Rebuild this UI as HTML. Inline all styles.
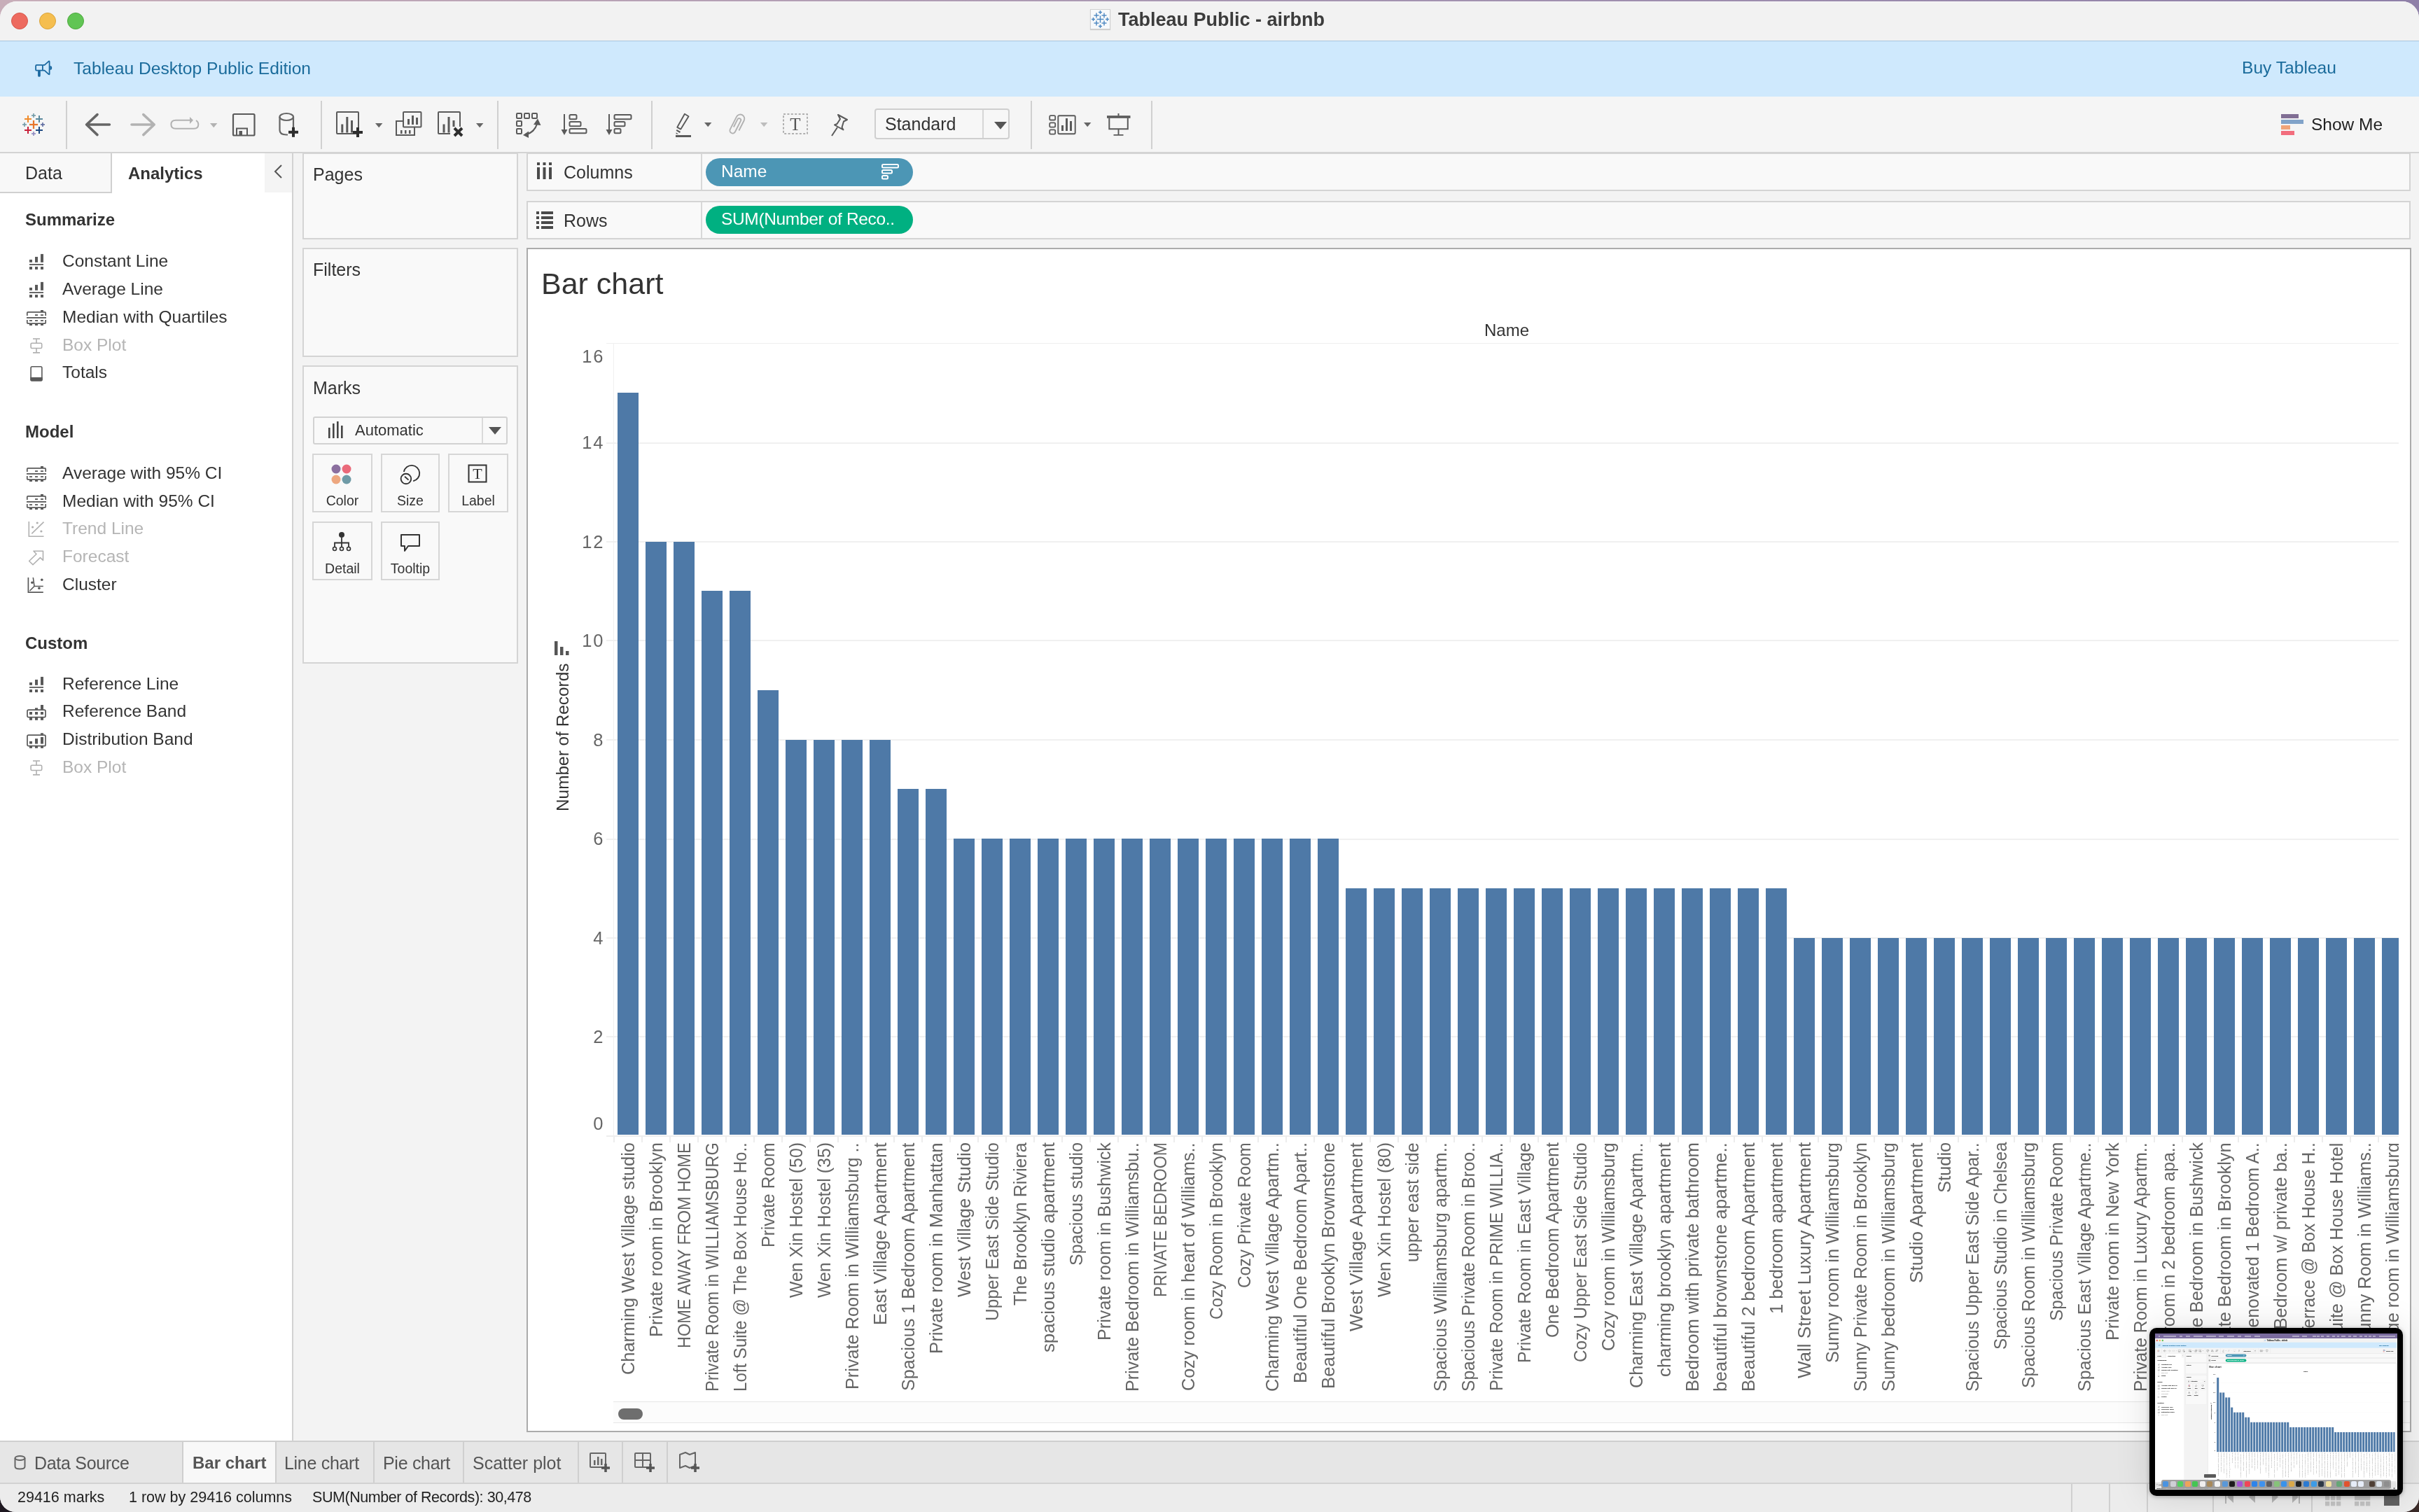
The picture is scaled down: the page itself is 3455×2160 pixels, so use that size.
<!DOCTYPE html>
<html><head><meta charset="utf-8"><title>Tableau Public - airbnb</title>
<style>
html,body{margin:0;padding:0;width:3455px;height:2160px;overflow:hidden;}
body{background:#2a2024;font-family:'Liberation Sans', sans-serif;}
.win div,.win svg{position:absolute;}
.win div{box-sizing:border-box;}
.thumbwin div{-webkit-text-stroke:1.2px currentColor;}
.thumbwin div.lab{-webkit-text-stroke:0;color:#9a9a9a !important;}
</style></head><body>
<div style="position:absolute;left:0;top:0;width:3455px;height:60px;background:linear-gradient(to right,#c8aeb9,#a897b2 50%,#8f80a8);"></div>
<div style="position:absolute;left:0;top:2100px;width:3455px;height:60px;background:linear-gradient(to right,#1e1820,#2e2226 50%,#3a2a28);"></div>
<div class="win" style="position:absolute;left:0;top:2px;width:3455px;height:2158px;border-radius:24px 24px 22px 22px;overflow:hidden;background:#f3f3f3;will-change:transform;"><div style="position:absolute;left:0;top:-2px;width:3455px;height:2160px;"><div style="left:0px;top:0px;width:3455px;height:58px;background:#f2f2f2;"></div><div style="left:0px;top:2px;width:3455px;height:1px;background:#fbfbfb;"></div><div style="left:16px;top:18px;width:24px;height:24px;background:#ed6a5f;border-radius:50%;border:1px solid #d5574c;"></div><div style="left:56px;top:18px;width:24px;height:24px;background:#f5be4f;border-radius:50%;border:1px solid #d9a33a;"></div><div style="left:96px;top:18px;width:24px;height:24px;background:#61c554;border-radius:50%;border:1px solid #4ea83f;"></div><svg style="position:absolute;left:1557px;top:13px;overflow:visible;box-shadow:0 1px 1px rgba(0,0,0,0.15);" width="29" height="29" viewBox="0 0 29 29"><rect x="0.5" y="0.5" width="28" height="28" fill="#f7f9fb" stroke="#d0d0d0" stroke-width="1"/><rect x="9.5" y="13.8" width="10" height="1.4" fill="#4a86c0"/><rect x="13.8" y="9.5" width="1.4" height="10" fill="#4a86c0"/><rect x="5.5" y="8.3" width="7.0" height="1.4" fill="#4a86c0"/><rect x="8.3" y="5.5" width="1.4" height="7.0" fill="#4a86c0"/><rect x="16.5" y="8.3" width="7.0" height="1.4" fill="#4a86c0"/><rect x="19.3" y="5.5" width="1.4" height="7.0" fill="#4a86c0"/><rect x="5.5" y="19.3" width="7.0" height="1.4" fill="#4a86c0"/><rect x="8.3" y="16.5" width="1.4" height="7.0" fill="#4a86c0"/><rect x="16.5" y="19.3" width="7.0" height="1.4" fill="#4a86c0"/><rect x="19.3" y="16.5" width="1.4" height="7.0" fill="#4a86c0"/><rect x="12.0" y="3.8" width="5.0" height="1.4" fill="#4a86c0"/><rect x="13.8" y="2.0" width="1.4" height="5.0" fill="#4a86c0"/><rect x="12.0" y="23.8" width="5.0" height="1.4" fill="#4a86c0"/><rect x="13.8" y="22.0" width="1.4" height="5.0" fill="#4a86c0"/><rect x="2.0" y="13.8" width="5.0" height="1.4" fill="#4a86c0"/><rect x="3.8" y="12.0" width="1.4" height="5.0" fill="#4a86c0"/><rect x="22.0" y="13.8" width="5.0" height="1.4" fill="#4a86c0"/><rect x="23.8" y="12.0" width="1.4" height="5.0" fill="#4a86c0"/></svg><div style="left:1597px;top:15.3px;font-size:27px;line-height:27px;color:#3c3c3c;font-weight:bold;white-space:nowrap;">Tableau Public - airbnb</div><div style="left:0px;top:58px;width:3455px;height:80px;background:#cfe9fd;"></div><div style="left:0px;top:58px;width:3455px;height:1px;background:#a9c6de;"></div><svg style="position:absolute;left:50px;top:86px;overflow:visible;" width="25" height="25" viewBox="0 0 25 25"><rect x="1.1" y="6.9" width="9.8" height="7.8" rx="1.3" fill="none" stroke="#1a68a0" stroke-width="1.8"/><path d="M10.9 6.9 L13.6 6.9 L19.6 1.6 Q20.6 1 20.6 2.4 L20.6 19.4 Q20.6 20.8 19.6 20.1 L13.6 14.7 L10.9 14.7" fill="none" stroke="#1a68a0" stroke-width="1.8" stroke-linejoin="round"/><rect x="4.1" y="14.5" width="3.7" height="9.3" rx="1.85" fill="#1a68a0"/><path d="M21.4 8 Q24.2 8 24.2 11 Q24.2 13.9 21.4 13.9 Z" fill="#1a68a0"/></svg><div style="left:105px;top:86.3px;font-size:24.6px;line-height:24.6px;color:#1a6b9b;white-space:nowrap;">Tableau Desktop Public Edition</div><div style="left:3202px;top:85.3px;font-size:24.6px;line-height:24.6px;color:#1a6b9b;white-space:nowrap;">Buy Tableau</div><div style="left:0px;top:138px;width:3455px;height:80px;background:#f5f5f5;"></div><div style="left:94px;top:144px;width:2px;height:69px;background:#d0d0d0;"></div><div style="left:458px;top:144px;width:2px;height:69px;background:#d0d0d0;"></div><div style="left:710px;top:144px;width:2px;height:69px;background:#d0d0d0;"></div><div style="left:930px;top:144px;width:2px;height:69px;background:#d0d0d0;"></div><div style="left:1472px;top:144px;width:2px;height:69px;background:#d0d0d0;"></div><div style="left:1644px;top:144px;width:2px;height:69px;background:#d0d0d0;"></div><svg style="position:absolute;left:28px;top:158px;overflow:visible;" width="40" height="40" viewBox="0 0 40 40"><rect x="14" y="18.9" width="12" height="2.2" fill="#e8762b"/><rect x="18.9" y="14" width="2.2" height="12" fill="#e8762b"/><rect x="7" y="11.0" width="10" height="2" fill="#f08b2c"/><rect x="11.0" y="7" width="2" height="10" fill="#f08b2c"/><rect x="23" y="11.0" width="10" height="2" fill="#5b8a9d"/><rect x="27.0" y="7" width="2" height="10" fill="#5b8a9d"/><rect x="17" y="6.2" width="6" height="1.6" fill="#729ba7"/><rect x="19.2" y="4" width="1.6" height="6" fill="#729ba7"/><rect x="4" y="19.2" width="6" height="1.6" fill="#729ba7"/><rect x="6.2" y="17" width="1.6" height="6" fill="#729ba7"/><rect x="30" y="19.2" width="6" height="1.6" fill="#5d6aa0"/><rect x="32.2" y="17" width="1.6" height="6" fill="#5d6aa0"/><rect x="7" y="27.0" width="10" height="2" fill="#c8203a"/><rect x="11.0" y="23" width="2" height="10" fill="#c8203a"/><rect x="23" y="27.0" width="10" height="2" fill="#1e4a82"/><rect x="27.0" y="23" width="2" height="10" fill="#1e4a82"/><rect x="17" y="32.2" width="6" height="1.6" fill="#8e8ac0"/><rect x="19.2" y="30" width="1.6" height="6" fill="#8e8ac0"/></svg><svg style="position:absolute;left:118px;top:158px;overflow:visible;" width="44" height="40" viewBox="0 0 44 40"><path d="M21 5.6 L5.6 20 L21 34.6 M5.6 20 L38.4 20" fill="none" stroke="#666" stroke-width="3.6" stroke-linecap="round" stroke-linejoin="round"/></svg><svg style="position:absolute;left:182px;top:158px;overflow:visible;" width="44" height="40" viewBox="0 0 44 40"><path d="M22.8 5.6 L38.2 20 L22.8 34.6 M38.2 20 L6 20" fill="none" stroke="#b2b2b2" stroke-width="3.6" stroke-linecap="round" stroke-linejoin="round"/></svg><svg style="position:absolute;left:240px;top:162px;overflow:visible;" width="48" height="26" viewBox="0 0 48 26"><path d="M32 9.8 L11 9.8 Q4.4 9.8 4.4 15.8 Q4.4 21.8 11 21.8 L37 21.8 Q43.3 21.8 43.3 15.8 Q43.3 12 40 10" fill="none" stroke="#b2b2b2" stroke-width="2"/><path d="M31 5 L36 9.8 L31 15 Z" fill="#b2b2b2"/></svg><svg style="position:absolute;left:299.8px;top:175.88px;overflow:visible;" width="10.4" height="6.24" viewBox="0 0 10.4 6.24"><path d="M0 0 L10.4 0 L5.2 6.24 Z" fill="#b2b2b2"/></svg><svg style="position:absolute;left:330px;top:160px;overflow:visible;" width="36" height="36" viewBox="0 0 36 36"><rect x="3" y="3" width="30.5" height="30.5" rx="1.5" fill="none" stroke="#5a5a5a" stroke-width="2.2"/><path d="M8 33.5 L8 23.5 L23 23.5 L23 33.5" fill="none" stroke="#5a5a5a" stroke-width="2"/><rect x="11.5" y="27" width="4.5" height="6.5" fill="#5a5a5a"/></svg><svg style="position:absolute;left:395px;top:158px;overflow:visible;" width="36" height="42" viewBox="0 0 36 42"><path d="M4.5 9 L4.5 28 Q4.5 34.5 14 34.5 L16 34.5 M24 26 L24 9" fill="none" stroke="#666" stroke-width="2.2"/><ellipse cx="14.2" cy="9" rx="9.8" ry="5" fill="none" stroke="#666" stroke-width="2.2"/><rect x="17" y="28.8" width="14" height="4" fill="#2e2e2e"/><rect x="22.0" y="23.8" width="4" height="14" fill="#2e2e2e"/></svg><svg style="position:absolute;left:478px;top:157px;overflow:visible;" width="46" height="46" viewBox="0 0 46 46"><rect x="3" y="3" width="31" height="31" rx="1" fill="none" stroke="#5a5a5a" stroke-width="2"/><rect x="9.3" y="20.5" width="3" height="12" fill="#5a5a5a"/><rect x="16.3" y="10" width="3" height="22.5" fill="#5a5a5a"/><rect x="23" y="15" width="3" height="17.5" fill="#5a5a5a"/><rect x="26" y="30.0" width="14" height="4" fill="#2e2e2e"/><rect x="31.0" y="25" width="4" height="14" fill="#2e2e2e"/></svg><svg style="position:absolute;left:535.8px;top:175.88px;overflow:visible;" width="10.4" height="6.24" viewBox="0 0 10.4 6.24"><path d="M0 0 L10.4 0 L5.2 6.24 Z" fill="#666"/></svg><svg style="position:absolute;left:563px;top:157px;overflow:visible;" width="44" height="40" viewBox="0 0 44 40"><rect x="13" y="3" width="25.5" height="21.5" rx="1" fill="#f5f5f5" stroke="#5a5a5a" stroke-width="2"/><rect x="19" y="13" width="3" height="8" fill="#5a5a5a"/><rect x="25" y="8" width="3" height="13" fill="#5a5a5a"/><rect x="31" y="11" width="3" height="10" fill="#5a5a5a"/><path d="M13 16 L3 16 L3 36 L29 36 L29 24.5" fill="none" stroke="#5a5a5a" stroke-width="2"/><rect x="9" y="29" width="2.5" height="5" fill="#5a5a5a"/><rect x="15" y="29" width="2.5" height="5" fill="#5a5a5a"/><rect x="21" y="29" width="2.5" height="5" fill="#5a5a5a"/></svg><svg style="position:absolute;left:623px;top:157px;overflow:visible;" width="46" height="46" viewBox="0 0 46 46"><rect x="3" y="3" width="31" height="31" rx="1" fill="none" stroke="#5a5a5a" stroke-width="2"/><rect x="9.5" y="20.5" width="3" height="12" fill="#5a5a5a"/><rect x="16.5" y="10" width="3" height="22.5" fill="#5a5a5a"/><rect x="23.5" y="15" width="3" height="17.5" fill="#5a5a5a"/><rect x="20" y="24" width="24" height="14" fill="#f5f5f5"/><path d="M26 26 L37 37 M37 26 L26 37" stroke="#2e2e2e" stroke-width="4"/></svg><svg style="position:absolute;left:679.8px;top:175.88px;overflow:visible;" width="10.4" height="6.24" viewBox="0 0 10.4 6.24"><path d="M0 0 L10.4 0 L5.2 6.24 Z" fill="#666"/></svg><svg style="position:absolute;left:736px;top:160px;overflow:visible;" width="40" height="40" viewBox="0 0 40 40"><rect x="2" y="2" width="7" height="7" rx="1" fill="none" stroke="#5a5a5a" stroke-width="2"/><rect x="13" y="2" width="7" height="7" rx="1" fill="none" stroke="#5a5a5a" stroke-width="2"/><rect x="24" y="2" width="7" height="7" rx="1" fill="none" stroke="#5a5a5a" stroke-width="2"/><rect x="2" y="13" width="7" height="7" rx="1" fill="none" stroke="#5a5a5a" stroke-width="2"/><rect x="2" y="24" width="7" height="7" rx="1" fill="none" stroke="#5a5a5a" stroke-width="2"/><path d="M14 32 Q27 30 31 17" fill="none" stroke="#5a5a5a" stroke-width="2.2"/><path d="M26 18 L32 9.5 L36.5 19 Z" fill="#5a5a5a"/><path d="M19 27.5 L11 33 L19 37 Z" fill="#5a5a5a"/></svg><svg style="position:absolute;left:800px;top:160px;overflow:visible;" width="42" height="36" viewBox="0 0 42 36"><path d="M6 3 L6 30" stroke="#5a5a5a" stroke-width="2"/><path d="M1.5 25 L6 33 L10.5 25 Z" fill="#5a5a5a"/><rect x="13.5" y="4" width="10" height="6.2" rx="1.5" fill="none" stroke="#5a5a5a" stroke-width="2"/><rect x="13.5" y="14" width="16" height="6.2" rx="1.5" fill="none" stroke="#5a5a5a" stroke-width="2"/><rect x="13.5" y="24" width="24" height="6.2" rx="1.5" fill="none" stroke="#5a5a5a" stroke-width="2"/></svg><svg style="position:absolute;left:864px;top:160px;overflow:visible;" width="42" height="36" viewBox="0 0 42 36"><path d="M6 3 L6 30" stroke="#5a5a5a" stroke-width="2"/><path d="M1.5 25 L6 33 L10.5 25 Z" fill="#5a5a5a"/><rect x="13.5" y="4" width="24" height="6.2" rx="1.5" fill="none" stroke="#5a5a5a" stroke-width="2"/><rect x="13.5" y="14" width="15" height="6.2" rx="1.5" fill="none" stroke="#5a5a5a" stroke-width="2"/><rect x="13.5" y="24" width="9" height="6.2" rx="1.5" fill="none" stroke="#5a5a5a" stroke-width="2"/></svg><svg style="position:absolute;left:963px;top:160px;overflow:visible;" width="28" height="38" viewBox="0 0 28 38"><path d="M14.9 2.8 L20.5 6.2 L9.3 24.6 L4.3 21.8 Z" fill="none" stroke="#5a5a5a" stroke-width="1.9" stroke-linejoin="round"/><path d="M3.2 25.9 L8.5 29" stroke="#5a5a5a" stroke-width="2.2"/><path d="M2.6 29.2 L6.2 31.4 L2.6 31.6 Z" fill="#5a5a5a"/><rect x="2" y="33" width="22" height="3" fill="#5a5a5a"/></svg><svg style="position:absolute;left:1005.8px;top:174.88px;overflow:visible;" width="10.4" height="6.24" viewBox="0 0 10.4 6.24"><path d="M0 0 L10.4 0 L5.2 6.24 Z" fill="#666"/></svg><svg style="position:absolute;left:1038px;top:160px;overflow:visible;" width="30" height="36" viewBox="0 0 30 36"><g transform="translate(15,18) rotate(27) translate(-6,-15.5)"><path d="M12 22 L12 6 A6 6 0 0 0 0 6 L0 26 A4 4 0 0 0 8 26 L8 8.5 A2.5 2.5 0 0 0 3 8.5 L3 21" fill="none" stroke="#b2b2b2" stroke-width="1.9"/></g></svg><svg style="position:absolute;left:1085.8px;top:174.88px;overflow:visible;" width="10.4" height="6.24" viewBox="0 0 10.4 6.24"><path d="M0 0 L10.4 0 L5.2 6.24 Z" fill="#bdbdbd"/></svg><svg style="position:absolute;left:1117px;top:161px;overflow:visible;" width="38" height="33" viewBox="0 0 38 33"><rect x="2" y="2" width="34" height="28" fill="none" stroke="#999" stroke-width="1.5" stroke-dasharray="3 2.4"/><text x="19" y="25" text-anchor="middle" font-family="Liberation Serif" font-size="25" fill="#555">T</text></svg><svg style="position:absolute;left:1183px;top:160px;overflow:visible;" width="32" height="38" viewBox="0 0 32 38"><path d="M14 4 L27 11 L22 13.5 L19.5 22 L21.5 25.5 L9 18.5 L12.5 17 L17 10 L14 4 Z" fill="none" stroke="#5a5a5a" stroke-width="2" stroke-linejoin="round"/><path d="M13 22 L5 34" stroke="#5a5a5a" stroke-width="2"/></svg><svg style="position:absolute;left:1496px;top:161px;overflow:visible;" width="46" height="34" viewBox="0 0 46 34"><rect x="3.2" y="4.2" width="8" height="6.3" rx="1.6" fill="none" stroke="#5a5a5a" stroke-width="1.8"/><rect x="3.2" y="14.3" width="8" height="6.3" rx="1.6" fill="none" stroke="#5a5a5a" stroke-width="1.8"/><rect x="3.2" y="24.4" width="8" height="6.3" rx="1.6" fill="none" stroke="#5a5a5a" stroke-width="1.8"/><rect x="15.3" y="4.2" width="24.4" height="26" rx="1.6" fill="none" stroke="#5a5a5a" stroke-width="1.9"/><rect x="20" y="18" width="3" height="8" fill="#5a5a5a"/><rect x="26" y="8" width="3" height="18" fill="#5a5a5a"/><rect x="32" y="12" width="3" height="14" fill="#5a5a5a"/></svg><svg style="position:absolute;left:1547.8px;top:174.88px;overflow:visible;" width="10.4" height="6.24" viewBox="0 0 10.4 6.24"><path d="M0 0 L10.4 0 L5.2 6.24 Z" fill="#666"/></svg><svg style="position:absolute;left:1579px;top:162px;overflow:visible;" width="38" height="38" viewBox="0 0 38 38"><rect x="2" y="3.2" width="33.5" height="3.6" fill="#5a5a5a"/><path d="M18.5 0 L18.5 3.5"  stroke="#5a5a5a" stroke-width="2"/><path d="M5.3 6.6 L5.3 22.3 L31.8 22.3 L31.8 6.6" fill="none" stroke="#5a5a5a" stroke-width="2"/><path d="M18.5 22.3 L18.5 30 M11.5 30.9 L25.5 30.9" stroke="#5a5a5a" stroke-width="1.9"/></svg><div style="left:1249px;top:155px;width:193px;height:44px;background:#f7f7f7;border:2px solid #cfcfcf;border-radius:4px;"></div><div style="left:1403px;top:157px;width:2px;height:40px;background:#d6d6d6;"></div><div style="left:1264px;top:165.0px;font-size:25px;line-height:25px;color:#333;white-space:nowrap;">Standard</div><svg style="position:absolute;left:1420px;top:173.6px;overflow:visible;" width="18" height="10.799999999999999" viewBox="0 0 18 10.799999999999999"><path d="M0 0 L18 0 L9 10.799999999999999 Z" fill="#555"/></svg><div style="left:3258px;top:163px;width:25px;height:6px;background:#806e94;"></div><div style="left:3258px;top:171px;width:32px;height:6px;background:#81a3c9;"></div><div style="left:3258px;top:179px;width:13px;height:6px;background:#f0a479;"></div><div style="left:3258px;top:187px;width:19px;height:6px;background:#f26d7d;"></div><div style="left:3301px;top:166.4px;font-size:24.5px;line-height:24.5px;color:#222;white-space:nowrap;">Show Me</div><div style="left:0px;top:217px;width:3455px;height:2px;background:#d3d3d3;"></div><div style="left:419px;top:219px;width:3036px;height:1840px;background:#f3f3f3;"></div><div style="left:0px;top:219px;width:419px;height:1840px;background:#ffffff;"></div><div style="left:417px;top:219px;width:2px;height:1840px;background:#d2d2d2;"></div><div style="left:0px;top:219px;width:160px;height:57px;background:#f8f8f8;border-right:2px solid #d0d0d0;border-bottom:2px solid #d0d0d0;"></div><div style="left:378px;top:219px;width:39px;height:56px;background:#f4f4f4;"></div><div style="left:36px;top:235.0px;font-size:25px;line-height:25px;color:#333;white-space:nowrap;">Data</div><div style="left:183px;top:235.8px;font-size:24px;line-height:24px;color:#333;font-weight:bold;white-space:nowrap;">Analytics</div><svg style="position:absolute;left:389px;top:234px;" width="16" height="22" viewBox="0 0 16 22"><path d="M13 2 L4 11 L13 20" fill="none" stroke="#555" stroke-width="2"/></svg><div style="left:36px;top:301.8px;font-size:24px;line-height:24px;color:#333;font-weight:bold;white-space:nowrap;">Summarize</div><div style="left:36px;top:605.3px;font-size:24px;line-height:24px;color:#333;font-weight:bold;white-space:nowrap;">Model</div><div style="left:36px;top:906.8px;font-size:24px;line-height:24px;color:#333;font-weight:bold;white-space:nowrap;">Custom</div><div style="left:89px;top:361.4px;font-size:24.5px;line-height:24.5px;color:#333;white-space:nowrap;">Constant Line</div><svg style="position:absolute;left:38px;top:362px;overflow:visible;" width="28" height="26" viewBox="0 0 28 26"><rect x="4" y="8.9" width="4" height="3.9" fill="#595959"/><rect x="12" y="4.9" width="4" height="7.9" fill="#595959"/><rect x="20" y="0.9" width="4" height="11.9" fill="#595959"/><rect x="4" y="15" width="20" height="1.8" fill="#595959"/><rect x="4" y="19" width="4" height="4" fill="#595959"/><rect x="12" y="19" width="4" height="4" fill="#595959"/><rect x="20" y="19" width="4" height="4" fill="#595959"/></svg><div style="left:89px;top:401.4px;font-size:24.5px;line-height:24.5px;color:#333;white-space:nowrap;">Average Line</div><svg style="position:absolute;left:38px;top:402px;overflow:visible;" width="28" height="26" viewBox="0 0 28 26"><rect x="4" y="8.9" width="4" height="3.9" fill="#595959"/><rect x="12" y="4.9" width="4" height="7.9" fill="#595959"/><rect x="20" y="0.9" width="4" height="11.9" fill="#595959"/><rect x="4" y="15" width="20" height="1.8" fill="#595959"/><rect x="4" y="19" width="4" height="4" fill="#595959"/><rect x="12" y="19" width="4" height="4" fill="#595959"/><rect x="20" y="19" width="4" height="4" fill="#595959"/></svg><div style="left:89px;top:441.4px;font-size:24.5px;line-height:24.5px;color:#333;white-space:nowrap;">Median with Quartiles</div><svg style="position:absolute;left:38px;top:442px;overflow:visible;" width="28" height="26" viewBox="0 0 28 26"><path d="M0.8 9 L0.8 5 Q0.8 3.8 2 3.8 L26 3.8 Q27.2 3.8 27.2 5 L27.2 9 M0.8 15 L0.8 19 Q0.8 20.2 2 20.2 L26 20.2 Q27.2 20.2 27.2 19 L27.2 15" fill="none" stroke="#595959" stroke-width="1.7"/><rect x="20" y="1" width="4" height="3" fill="#595959"/><rect x="0" y="11" width="28" height="1.8" fill="#595959"/><rect x="12" y="7.2" width="4" height="1.8" fill="#595959"/><rect x="20" y="7.2" width="4" height="1.8" fill="#595959"/><rect x="4" y="15.2" width="4" height="1.8" fill="#595959"/><rect x="12" y="15.2" width="4" height="1.8" fill="#595959"/><rect x="20" y="15.2" width="4" height="1.8" fill="#595959"/><rect x="4" y="20.5" width="4" height="2.5" fill="#595959"/><rect x="12" y="20.5" width="4" height="2.5" fill="#595959"/><rect x="20" y="20.5" width="4" height="2.5" fill="#595959"/></svg><div style="left:89px;top:481.4px;font-size:24.5px;line-height:24.5px;color:#b5b5b5;white-space:nowrap;">Box Plot</div><svg style="position:absolute;left:38px;top:482px;overflow:visible;" width="28" height="26" viewBox="0 0 28 26"><rect x="9" y="1.2" width="10" height="1.6" fill="#b0b0b0"/><rect x="13.2" y="2.5" width="1.6" height="5.5" fill="#b0b0b0"/><rect x="13.2" y="16" width="1.6" height="5.5" fill="#b0b0b0"/><rect x="9" y="21" width="10" height="1.7" fill="#b0b0b0"/><rect x="6.1" y="8.3" width="15.6" height="7.2" rx="1.5" fill="none" stroke="#b0b0b0" stroke-width="1.6"/></svg><div style="left:89px;top:520.4px;font-size:24.5px;line-height:24.5px;color:#333;white-space:nowrap;">Totals</div><svg style="position:absolute;left:38px;top:521px;overflow:visible;" width="28" height="26" viewBox="0 0 28 26"><rect x="6.1" y="2.8" width="15.8" height="19.9" rx="1.8" fill="none" stroke="#595959" stroke-width="1.6"/><path d="M5.3 18 L22.7 18 L22.7 21.5 Q22.7 23.5 20.7 23.5 L7.3 23.5 Q5.3 23.5 5.3 21.5 Z" fill="#595959"/></svg><div style="left:89px;top:663.9px;font-size:24.5px;line-height:24.5px;color:#333;white-space:nowrap;">Average with 95% CI</div><svg style="position:absolute;left:38px;top:664.5px;overflow:visible;" width="28" height="26" viewBox="0 0 28 26"><path d="M0.8 9 L0.8 5 Q0.8 3.8 2 3.8 L26 3.8 Q27.2 3.8 27.2 5 L27.2 9 M0.8 15 L0.8 19 Q0.8 20.2 2 20.2 L26 20.2 Q27.2 20.2 27.2 19 L27.2 15" fill="none" stroke="#595959" stroke-width="1.7"/><rect x="20" y="1" width="4" height="3" fill="#595959"/><rect x="0" y="11" width="28" height="1.8" fill="#595959"/><rect x="12" y="7.2" width="4" height="1.8" fill="#595959"/><rect x="20" y="7.2" width="4" height="1.8" fill="#595959"/><rect x="4" y="15.2" width="4" height="1.8" fill="#595959"/><rect x="12" y="15.2" width="4" height="1.8" fill="#595959"/><rect x="20" y="15.2" width="4" height="1.8" fill="#595959"/><rect x="4" y="20.5" width="4" height="2.5" fill="#595959"/><rect x="12" y="20.5" width="4" height="2.5" fill="#595959"/><rect x="20" y="20.5" width="4" height="2.5" fill="#595959"/></svg><div style="left:89px;top:703.9px;font-size:24.5px;line-height:24.5px;color:#333;white-space:nowrap;">Median with 95% CI</div><svg style="position:absolute;left:38px;top:704.5px;overflow:visible;" width="28" height="26" viewBox="0 0 28 26"><path d="M0.8 9 L0.8 5 Q0.8 3.8 2 3.8 L26 3.8 Q27.2 3.8 27.2 5 L27.2 9 M0.8 15 L0.8 19 Q0.8 20.2 2 20.2 L26 20.2 Q27.2 20.2 27.2 19 L27.2 15" fill="none" stroke="#595959" stroke-width="1.7"/><rect x="20" y="1" width="4" height="3" fill="#595959"/><rect x="0" y="11" width="28" height="1.8" fill="#595959"/><rect x="12" y="7.2" width="4" height="1.8" fill="#595959"/><rect x="20" y="7.2" width="4" height="1.8" fill="#595959"/><rect x="4" y="15.2" width="4" height="1.8" fill="#595959"/><rect x="12" y="15.2" width="4" height="1.8" fill="#595959"/><rect x="20" y="15.2" width="4" height="1.8" fill="#595959"/><rect x="4" y="20.5" width="4" height="2.5" fill="#595959"/><rect x="12" y="20.5" width="4" height="2.5" fill="#595959"/><rect x="20" y="20.5" width="4" height="2.5" fill="#595959"/></svg><div style="left:89px;top:743.4px;font-size:24.5px;line-height:24.5px;color:#b5b5b5;white-space:nowrap;">Trend Line</div><svg style="position:absolute;left:38px;top:744px;overflow:visible;" width="28" height="26" viewBox="0 0 28 26"><path d="M3.3 1 L3.3 22.3 L24.5 22.3" fill="none" stroke="#b0b0b0" stroke-width="1.6"/><path d="M7.3 18.3 L24.5 1.7" stroke="#b0b0b0" stroke-width="1.6"/><circle cx="15.2" cy="3" r="1.6" fill="#b0b0b0"/><circle cx="8.6" cy="9" r="1.6" fill="#b0b0b0"/><circle cx="20.9" cy="15" r="1.6" fill="#b0b0b0"/></svg><div style="left:89px;top:783.4px;font-size:24.5px;line-height:24.5px;color:#b5b5b5;white-space:nowrap;">Forecast</div><svg style="position:absolute;left:38px;top:784px;overflow:visible;" width="28" height="26" viewBox="0 0 28 26"><path d="M3.6 17.5 L14 7.5 L10 3.2 L23.5 3.2 L23.5 16.5 L19.5 12.6 L9 22.8 Z" fill="none" stroke="#b0b0b0" stroke-width="1.6" stroke-linejoin="round"/></svg><div style="left:89px;top:822.9px;font-size:24.5px;line-height:24.5px;color:#333;white-space:nowrap;">Cluster</div><svg style="position:absolute;left:38px;top:823.5px;overflow:visible;" width="28" height="26" viewBox="0 0 28 26"><path d="M2.4 1 L2.4 22.2 L23.8 22.2" fill="none" stroke="#595959" stroke-width="1.7"/><path d="M4.5 20 L11 13.5 L9.3 1 M11 13.5 L23.8 13.5" fill="none" stroke="#595959" stroke-width="1.6"/><circle cx="7.9" cy="8.3" r="1.8" fill="#595959"/><circle cx="21.8" cy="4.3" r="1.8" fill="#595959"/><circle cx="17.9" cy="16.3" r="1.8" fill="#595959"/></svg><div style="left:89px;top:964.9px;font-size:24.5px;line-height:24.5px;color:#333;white-space:nowrap;">Reference Line</div><svg style="position:absolute;left:38px;top:965.5px;overflow:visible;" width="28" height="26" viewBox="0 0 28 26"><rect x="4" y="8.9" width="4" height="3.9" fill="#595959"/><rect x="12" y="4.9" width="4" height="7.9" fill="#595959"/><rect x="20" y="0.9" width="4" height="11.9" fill="#595959"/><rect x="4" y="15" width="20" height="1.8" fill="#595959"/><rect x="4" y="19" width="4" height="4" fill="#595959"/><rect x="12" y="19" width="4" height="4" fill="#595959"/><rect x="20" y="19" width="4" height="4" fill="#595959"/></svg><div style="left:89px;top:1004.4px;font-size:24.5px;line-height:24.5px;color:#333;white-space:nowrap;">Reference Band</div><svg style="position:absolute;left:38px;top:1005px;overflow:visible;" width="28" height="26" viewBox="0 0 28 26"><rect x="1" y="9.2" width="26" height="10.4" rx="1.8" fill="none" stroke="#595959" stroke-width="1.7"/><rect x="4" y="12" width="4" height="3.8" fill="#595959"/><rect x="12" y="12" width="4" height="3.8" fill="#595959"/><rect x="20" y="12" width="4" height="3.8" fill="#595959"/><rect x="12" y="6.3" width="4" height="2.5" fill="#595959"/><rect x="20" y="2" width="4" height="6.8" fill="#595959"/><rect x="4" y="20" width="4" height="3.8" fill="#595959"/><rect x="12" y="20" width="4" height="3.8" fill="#595959"/><rect x="20" y="20" width="4" height="3.8" fill="#595959"/></svg><div style="left:89px;top:1044.4px;font-size:24.5px;line-height:24.5px;color:#333;white-space:nowrap;">Distribution Band</div><svg style="position:absolute;left:38px;top:1045px;overflow:visible;" width="28" height="26" viewBox="0 0 28 26"><rect x="1" y="5.2" width="26" height="15.5" rx="1.8" fill="none" stroke="#595959" stroke-width="1.7"/><rect x="4" y="14" width="4" height="3.6" fill="#595959"/><rect x="12" y="10.2" width="4" height="7.4" fill="#595959"/><rect x="20" y="8" width="4" height="9.6" fill="#595959"/><rect x="20" y="2.3" width="4" height="2.4" fill="#595959"/><rect x="4" y="21" width="4" height="2.8" fill="#595959"/><rect x="12" y="21" width="4" height="2.8" fill="#595959"/><rect x="20" y="21" width="4" height="2.8" fill="#595959"/></svg><div style="left:89px;top:1084.4px;font-size:24.5px;line-height:24.5px;color:#b5b5b5;white-space:nowrap;">Box Plot</div><svg style="position:absolute;left:38px;top:1085px;overflow:visible;" width="28" height="26" viewBox="0 0 28 26"><rect x="9" y="1.2" width="10" height="1.6" fill="#b0b0b0"/><rect x="13.2" y="2.5" width="1.6" height="5.5" fill="#b0b0b0"/><rect x="13.2" y="16" width="1.6" height="5.5" fill="#b0b0b0"/><rect x="9" y="21" width="10" height="1.7" fill="#b0b0b0"/><rect x="6.1" y="8.3" width="15.6" height="7.2" rx="1.5" fill="none" stroke="#b0b0b0" stroke-width="1.6"/></svg><div style="left:432px;top:218px;width:308px;height:124px;background:#f9f9f9;border:2px solid #d4d4d4;"></div><div style="left:447px;top:237.0px;font-size:25px;line-height:25px;color:#333;white-space:nowrap;">Pages</div><div style="left:432px;top:354px;width:308px;height:156px;background:#f9f9f9;border:2px solid #d4d4d4;"></div><div style="left:447px;top:373.0px;font-size:25px;line-height:25px;color:#333;white-space:nowrap;">Filters</div><div style="left:432px;top:522px;width:308px;height:426px;background:#f9f9f9;border:2px solid #d4d4d4;"></div><div style="left:447px;top:542.0px;font-size:25px;line-height:25px;color:#333;white-space:nowrap;">Marks</div><div style="left:447px;top:595px;width:278px;height:40px;background:#f9f9f9;border:2px solid #d2d2d2;border-radius:3px;"></div><div style="left:688px;top:597px;width:2px;height:36px;background:#dadada;"></div><svg style="position:absolute;left:469px;top:602px;" width="22" height="24" viewBox="0 0 22 24"><rect x="0" y="9" width="2.6" height="15" fill="#444"/><rect x="6" y="3" width="2.6" height="21" fill="#444"/><rect x="12" y="0" width="2.6" height="24" fill="#444"/><rect x="18" y="6" width="2.6" height="18" fill="#444"/></svg><div style="left:507px;top:604.0px;font-size:22px;line-height:22px;color:#333;white-space:nowrap;">Automatic</div><svg style="position:absolute;left:698px;top:609.6px;overflow:visible;" width="18" height="10.799999999999999" viewBox="0 0 18 10.799999999999999"><path d="M0 0 L18 0 L9 10.799999999999999 Z" fill="#555"/></svg><div style="left:446px;top:648px;width:86px;height:84px;background:#f9f9f9;border:2px solid #d6d6d6;"></div><div style="left:446px;top:705.6px;font-size:19.5px;line-height:19.5px;color:#333;width:86px;text-align:center;white-space:nowrap;">Color</div><svg style="position:absolute;left:473px;top:663px;overflow:visible;" width="29" height="29" viewBox="0 0 29 29"><circle cx="7" cy="7" r="6.5" fill="#8b6f9f"/><circle cx="22" cy="7" r="6.5" fill="#ea6a7a"/><circle cx="7" cy="22" r="6.5" fill="#eda77f"/><circle cx="22" cy="22" r="6.5" fill="#6f9ba7"/></svg><div style="left:544px;top:648px;width:84px;height:84px;background:#f9f9f9;border:2px solid #d6d6d6;"></div><div style="left:544px;top:705.6px;font-size:19.5px;line-height:19.5px;color:#333;width:84px;text-align:center;white-space:nowrap;">Size</div><svg style="position:absolute;left:571px;top:663px;overflow:visible;" width="30" height="30" viewBox="0 0 30 30"><path d="M5.8 11 A11.3 11.3 0 1 1 19.2 24.2" fill="none" stroke="#333" stroke-width="1.9"/><circle cx="8.9" cy="21" r="7.3" fill="none" stroke="#333" stroke-width="1.9"/><path d="M7 17.8 L12.5 22.6" stroke="#333" stroke-width="1.9"/></svg><div style="left:640px;top:648px;width:86px;height:84px;background:#f9f9f9;border:2px solid #d6d6d6;"></div><div style="left:640px;top:705.6px;font-size:19.5px;line-height:19.5px;color:#333;width:86px;text-align:center;white-space:nowrap;">Label</div><svg style="position:absolute;left:668px;top:663px;overflow:visible;" width="28" height="28" viewBox="0 0 28 28"><rect x="1.5" y="1.5" width="25" height="24" fill="none" stroke="#333" stroke-width="2"/><text x="14" y="21" text-anchor="middle" font-family="Liberation Serif" font-size="22" fill="#333">T</text></svg><div style="left:446px;top:745px;width:86px;height:84px;background:#f9f9f9;border:2px solid #d6d6d6;"></div><div style="left:446px;top:802.6px;font-size:19.5px;line-height:19.5px;color:#333;width:86px;text-align:center;white-space:nowrap;">Detail</div><svg style="position:absolute;left:475px;top:760px;overflow:visible;" width="28" height="28" viewBox="0 0 28 28"><circle cx="13" cy="4" r="4" fill="#333"/><path d="M13 8 L13 16 M3 21 L3 15.5 L23 15.5 L23 21 M13 15.5 L13 21" fill="none" stroke="#333" stroke-width="1.8"/><circle cx="3" cy="24" r="2.5" fill="none" stroke="#333" stroke-width="1.6"/><circle cx="13" cy="24" r="2.5" fill="none" stroke="#333" stroke-width="1.6"/><circle cx="23" cy="24" r="2.5" fill="none" stroke="#333" stroke-width="1.6"/></svg><div style="left:544px;top:745px;width:84px;height:84px;background:#f9f9f9;border:2px solid #d6d6d6;"></div><div style="left:544px;top:802.6px;font-size:19.5px;line-height:19.5px;color:#333;width:84px;text-align:center;white-space:nowrap;">Tooltip</div><svg style="position:absolute;left:571px;top:762px;overflow:visible;" width="30" height="28" viewBox="0 0 30 28"><path d="M2 2 L28 2 L28 18 L12 18 L7 25 L7 18 L2 18 Z" fill="none" stroke="#333" stroke-width="2" stroke-linejoin="round"/></svg><div style="left:752px;top:218px;width:2691px;height:55px;background:#f9f9f9;border:2px solid #d4d4d4;"></div><div style="left:1001px;top:220px;width:2px;height:51px;background:#d8d8d8;"></div><div style="left:805px;top:234.0px;font-size:25px;line-height:25px;color:#333;white-space:nowrap;">Columns</div><svg style="position:absolute;left:767px;top:232px;overflow:visible;" width="22" height="24" viewBox="0 0 22 24"><rect x="0" y="0" width="4" height="4" fill="#4a4a4a"/><rect x="0" y="7" width="4" height="17" fill="#4a4a4a"/><rect x="8.5" y="0" width="4" height="4" fill="#4a4a4a"/><rect x="8.5" y="7" width="4" height="17" fill="#4a4a4a"/><rect x="17" y="0" width="4" height="4" fill="#4a4a4a"/><rect x="17" y="7" width="4" height="17" fill="#4a4a4a"/></svg><div style="left:752px;top:287px;width:2691px;height:55px;background:#f9f9f9;border:2px solid #d4d4d4;"></div><div style="left:1001px;top:289px;width:2px;height:51px;background:#d8d8d8;"></div><div style="left:805px;top:303.0px;font-size:25px;line-height:25px;color:#333;white-space:nowrap;">Rows</div><svg style="position:absolute;left:766px;top:302px;overflow:visible;" width="26" height="26" viewBox="0 0 26 26"><rect x="0" y="0" width="4" height="4" fill="#4a4a4a"/><rect x="7" y="0" width="17" height="4" fill="#4a4a4a"/><rect x="0" y="7" width="4" height="4" fill="#4a4a4a"/><rect x="7" y="7" width="17" height="4" fill="#4a4a4a"/><rect x="0" y="14" width="4" height="4" fill="#4a4a4a"/><rect x="7" y="14" width="17" height="4" fill="#4a4a4a"/><rect x="0" y="21" width="4" height="4" fill="#4a4a4a"/><rect x="7" y="21" width="17" height="4" fill="#4a4a4a"/></svg><div style="left:1008px;top:226px;width:296px;height:40px;background:#4c96b5;border-radius:20px;"></div><div style="left:1030px;top:233.4px;font-size:24.5px;line-height:24.5px;color:#ffffff;white-space:nowrap;">Name</div><svg style="position:absolute;left:1259px;top:234px;" width="26" height="23" viewBox="0 0 26 23"><rect x="1" y="1" width="23" height="4.5" rx="1.5" fill="none" stroke="#fff" stroke-width="2"/><rect x="1" y="9" width="14" height="4.5" rx="1.5" fill="none" stroke="#fff" stroke-width="2"/><rect x="1" y="17" width="8" height="4.5" rx="1.5" fill="none" stroke="#fff" stroke-width="2"/></svg><div style="left:1008px;top:294px;width:296px;height:40px;background:#00b081;border-radius:20px;"></div><div style="left:1030px;top:301.4px;font-size:24.5px;line-height:24.5px;color:#ffffff;white-space:nowrap;letter-spacing:-0.35px;">SUM(Number of Reco..</div><div style="left:752px;top:354px;width:2692px;height:1692px;background:#ffffff;border:2px solid #ababab;"></div><div style="left:773px;top:384.4px;font-size:43px;line-height:43px;color:#333;white-space:nowrap;">Bar chart</div><div style="left:2120px;top:459.8px;font-size:24px;line-height:24px;color:#333;white-space:nowrap;">Name</div><div style="left:866px;top:490px;width:2560px;height:1px;background:#efefef;"></div><div style="left:866px;top:1480px;width:2560px;height:2px;background:#f0f0f0;"></div><div style="left:866px;top:1339px;width:2560px;height:2px;background:#f0f0f0;"></div><div style="left:866px;top:1198px;width:2560px;height:2px;background:#f0f0f0;"></div><div style="left:866px;top:1056px;width:2560px;height:2px;background:#f0f0f0;"></div><div style="left:866px;top:914px;width:2560px;height:2px;background:#f0f0f0;"></div><div style="left:866px;top:773px;width:2560px;height:2px;background:#f0f0f0;"></div><div style="left:866px;top:632px;width:2560px;height:2px;background:#f0f0f0;"></div><div style="left:876px;top:490px;width:1px;height:1133px;background:#f0f0f0;"></div><div style="left:866px;top:1622px;width:2560px;height:2px;background:#ededed;"></div><div style="left:800px;top:1592.6px;font-size:25.5px;line-height:25.5px;color:#666;width:63.5px;text-align:right;white-space:nowrap;letter-spacing:2px;">0</div><div style="left:800px;top:1469.1px;font-size:25.5px;line-height:25.5px;color:#666;width:63.5px;text-align:right;white-space:nowrap;letter-spacing:2px;">2</div><div style="left:800px;top:1327.6px;font-size:25.5px;line-height:25.5px;color:#666;width:63.5px;text-align:right;white-space:nowrap;letter-spacing:2px;">4</div><div style="left:800px;top:1186.1px;font-size:25.5px;line-height:25.5px;color:#666;width:63.5px;text-align:right;white-space:nowrap;letter-spacing:2px;">6</div><div style="left:800px;top:1044.6px;font-size:25.5px;line-height:25.5px;color:#666;width:63.5px;text-align:right;white-space:nowrap;letter-spacing:2px;">8</div><div style="left:800px;top:903.1px;font-size:25.5px;line-height:25.5px;color:#666;width:63.5px;text-align:right;white-space:nowrap;letter-spacing:2px;">10</div><div style="left:800px;top:761.6px;font-size:25.5px;line-height:25.5px;color:#666;width:63.5px;text-align:right;white-space:nowrap;letter-spacing:2px;">12</div><div style="left:800px;top:620.1px;font-size:25.5px;line-height:25.5px;color:#666;width:63.5px;text-align:right;white-space:nowrap;letter-spacing:2px;">14</div><div style="left:800px;top:496.9px;font-size:25.5px;line-height:25.5px;color:#666;width:63.5px;text-align:right;white-space:nowrap;letter-spacing:2px;">16</div><div style="left:882px;top:561.2px;width:30px;height:1059.8px;background:#4e79a7;"></div><div style="left:876px;top:1624px;width:2px;height:8px;background:#ededed;"></div><div style="left:922px;top:773.5px;width:30px;height:847.5px;background:#4e79a7;"></div><div style="left:916px;top:1624px;width:2px;height:8px;background:#ededed;"></div><div style="left:962px;top:773.5px;width:30px;height:847.5px;background:#4e79a7;"></div><div style="left:956px;top:1624px;width:2px;height:8px;background:#ededed;"></div><div style="left:1002px;top:844.2px;width:30px;height:776.8px;background:#4e79a7;"></div><div style="left:996px;top:1624px;width:2px;height:8px;background:#ededed;"></div><div style="left:1042px;top:844.2px;width:30px;height:776.8px;background:#4e79a7;"></div><div style="left:1036px;top:1624px;width:2px;height:8px;background:#ededed;"></div><div style="left:1082px;top:985.8px;width:30px;height:635.2px;background:#4e79a7;"></div><div style="left:1076px;top:1624px;width:2px;height:8px;background:#ededed;"></div><div style="left:1122px;top:1056.5px;width:30px;height:564.5px;background:#4e79a7;"></div><div style="left:1116px;top:1624px;width:2px;height:8px;background:#ededed;"></div><div style="left:1162px;top:1056.5px;width:30px;height:564.5px;background:#4e79a7;"></div><div style="left:1156px;top:1624px;width:2px;height:8px;background:#ededed;"></div><div style="left:1202px;top:1056.5px;width:30px;height:564.5px;background:#4e79a7;"></div><div style="left:1196px;top:1624px;width:2px;height:8px;background:#ededed;"></div><div style="left:1242px;top:1056.5px;width:30px;height:564.5px;background:#4e79a7;"></div><div style="left:1236px;top:1624px;width:2px;height:8px;background:#ededed;"></div><div style="left:1282px;top:1127.2px;width:30px;height:493.8px;background:#4e79a7;"></div><div style="left:1276px;top:1624px;width:2px;height:8px;background:#ededed;"></div><div style="left:1322px;top:1127.2px;width:30px;height:493.8px;background:#4e79a7;"></div><div style="left:1316px;top:1624px;width:2px;height:8px;background:#ededed;"></div><div style="left:1362px;top:1198.0px;width:30px;height:423.0px;background:#4e79a7;"></div><div style="left:1356px;top:1624px;width:2px;height:8px;background:#ededed;"></div><div style="left:1402px;top:1198.0px;width:30px;height:423.0px;background:#4e79a7;"></div><div style="left:1396px;top:1624px;width:2px;height:8px;background:#ededed;"></div><div style="left:1442px;top:1198.0px;width:30px;height:423.0px;background:#4e79a7;"></div><div style="left:1436px;top:1624px;width:2px;height:8px;background:#ededed;"></div><div style="left:1482px;top:1198.0px;width:30px;height:423.0px;background:#4e79a7;"></div><div style="left:1476px;top:1624px;width:2px;height:8px;background:#ededed;"></div><div style="left:1522px;top:1198.0px;width:30px;height:423.0px;background:#4e79a7;"></div><div style="left:1516px;top:1624px;width:2px;height:8px;background:#ededed;"></div><div style="left:1562px;top:1198.0px;width:30px;height:423.0px;background:#4e79a7;"></div><div style="left:1556px;top:1624px;width:2px;height:8px;background:#ededed;"></div><div style="left:1602px;top:1198.0px;width:30px;height:423.0px;background:#4e79a7;"></div><div style="left:1596px;top:1624px;width:2px;height:8px;background:#ededed;"></div><div style="left:1642px;top:1198.0px;width:30px;height:423.0px;background:#4e79a7;"></div><div style="left:1636px;top:1624px;width:2px;height:8px;background:#ededed;"></div><div style="left:1682px;top:1198.0px;width:30px;height:423.0px;background:#4e79a7;"></div><div style="left:1676px;top:1624px;width:2px;height:8px;background:#ededed;"></div><div style="left:1722px;top:1198.0px;width:30px;height:423.0px;background:#4e79a7;"></div><div style="left:1716px;top:1624px;width:2px;height:8px;background:#ededed;"></div><div style="left:1762px;top:1198.0px;width:30px;height:423.0px;background:#4e79a7;"></div><div style="left:1756px;top:1624px;width:2px;height:8px;background:#ededed;"></div><div style="left:1802px;top:1198.0px;width:30px;height:423.0px;background:#4e79a7;"></div><div style="left:1796px;top:1624px;width:2px;height:8px;background:#ededed;"></div><div style="left:1842px;top:1198.0px;width:30px;height:423.0px;background:#4e79a7;"></div><div style="left:1836px;top:1624px;width:2px;height:8px;background:#ededed;"></div><div style="left:1882px;top:1198.0px;width:30px;height:423.0px;background:#4e79a7;"></div><div style="left:1876px;top:1624px;width:2px;height:8px;background:#ededed;"></div><div style="left:1922px;top:1268.8px;width:30px;height:352.2px;background:#4e79a7;"></div><div style="left:1916px;top:1624px;width:2px;height:8px;background:#ededed;"></div><div style="left:1962px;top:1268.8px;width:30px;height:352.2px;background:#4e79a7;"></div><div style="left:1956px;top:1624px;width:2px;height:8px;background:#ededed;"></div><div style="left:2002px;top:1268.8px;width:30px;height:352.2px;background:#4e79a7;"></div><div style="left:1996px;top:1624px;width:2px;height:8px;background:#ededed;"></div><div style="left:2042px;top:1268.8px;width:30px;height:352.2px;background:#4e79a7;"></div><div style="left:2036px;top:1624px;width:2px;height:8px;background:#ededed;"></div><div style="left:2082px;top:1268.8px;width:30px;height:352.2px;background:#4e79a7;"></div><div style="left:2076px;top:1624px;width:2px;height:8px;background:#ededed;"></div><div style="left:2122px;top:1268.8px;width:30px;height:352.2px;background:#4e79a7;"></div><div style="left:2116px;top:1624px;width:2px;height:8px;background:#ededed;"></div><div style="left:2162px;top:1268.8px;width:30px;height:352.2px;background:#4e79a7;"></div><div style="left:2156px;top:1624px;width:2px;height:8px;background:#ededed;"></div><div style="left:2202px;top:1268.8px;width:30px;height:352.2px;background:#4e79a7;"></div><div style="left:2196px;top:1624px;width:2px;height:8px;background:#ededed;"></div><div style="left:2242px;top:1268.8px;width:30px;height:352.2px;background:#4e79a7;"></div><div style="left:2236px;top:1624px;width:2px;height:8px;background:#ededed;"></div><div style="left:2282px;top:1268.8px;width:30px;height:352.2px;background:#4e79a7;"></div><div style="left:2276px;top:1624px;width:2px;height:8px;background:#ededed;"></div><div style="left:2322px;top:1268.8px;width:30px;height:352.2px;background:#4e79a7;"></div><div style="left:2316px;top:1624px;width:2px;height:8px;background:#ededed;"></div><div style="left:2362px;top:1268.8px;width:30px;height:352.2px;background:#4e79a7;"></div><div style="left:2356px;top:1624px;width:2px;height:8px;background:#ededed;"></div><div style="left:2402px;top:1268.8px;width:30px;height:352.2px;background:#4e79a7;"></div><div style="left:2396px;top:1624px;width:2px;height:8px;background:#ededed;"></div><div style="left:2442px;top:1268.8px;width:30px;height:352.2px;background:#4e79a7;"></div><div style="left:2436px;top:1624px;width:2px;height:8px;background:#ededed;"></div><div style="left:2482px;top:1268.8px;width:30px;height:352.2px;background:#4e79a7;"></div><div style="left:2476px;top:1624px;width:2px;height:8px;background:#ededed;"></div><div style="left:2522px;top:1268.8px;width:30px;height:352.2px;background:#4e79a7;"></div><div style="left:2516px;top:1624px;width:2px;height:8px;background:#ededed;"></div><div style="left:2562px;top:1339.5px;width:30px;height:281.5px;background:#4e79a7;"></div><div style="left:2556px;top:1624px;width:2px;height:8px;background:#ededed;"></div><div style="left:2602px;top:1339.5px;width:30px;height:281.5px;background:#4e79a7;"></div><div style="left:2596px;top:1624px;width:2px;height:8px;background:#ededed;"></div><div style="left:2642px;top:1339.5px;width:30px;height:281.5px;background:#4e79a7;"></div><div style="left:2636px;top:1624px;width:2px;height:8px;background:#ededed;"></div><div style="left:2682px;top:1339.5px;width:30px;height:281.5px;background:#4e79a7;"></div><div style="left:2676px;top:1624px;width:2px;height:8px;background:#ededed;"></div><div style="left:2722px;top:1339.5px;width:30px;height:281.5px;background:#4e79a7;"></div><div style="left:2716px;top:1624px;width:2px;height:8px;background:#ededed;"></div><div style="left:2762px;top:1339.5px;width:30px;height:281.5px;background:#4e79a7;"></div><div style="left:2756px;top:1624px;width:2px;height:8px;background:#ededed;"></div><div style="left:2802px;top:1339.5px;width:30px;height:281.5px;background:#4e79a7;"></div><div style="left:2796px;top:1624px;width:2px;height:8px;background:#ededed;"></div><div style="left:2842px;top:1339.5px;width:30px;height:281.5px;background:#4e79a7;"></div><div style="left:2836px;top:1624px;width:2px;height:8px;background:#ededed;"></div><div style="left:2882px;top:1339.5px;width:30px;height:281.5px;background:#4e79a7;"></div><div style="left:2876px;top:1624px;width:2px;height:8px;background:#ededed;"></div><div style="left:2922px;top:1339.5px;width:30px;height:281.5px;background:#4e79a7;"></div><div style="left:2916px;top:1624px;width:2px;height:8px;background:#ededed;"></div><div style="left:2962px;top:1339.5px;width:30px;height:281.5px;background:#4e79a7;"></div><div style="left:2956px;top:1624px;width:2px;height:8px;background:#ededed;"></div><div style="left:3002px;top:1339.5px;width:30px;height:281.5px;background:#4e79a7;"></div><div style="left:2996px;top:1624px;width:2px;height:8px;background:#ededed;"></div><div style="left:3042px;top:1339.5px;width:30px;height:281.5px;background:#4e79a7;"></div><div style="left:3036px;top:1624px;width:2px;height:8px;background:#ededed;"></div><div style="left:3082px;top:1339.5px;width:30px;height:281.5px;background:#4e79a7;"></div><div style="left:3076px;top:1624px;width:2px;height:8px;background:#ededed;"></div><div style="left:3122px;top:1339.5px;width:30px;height:281.5px;background:#4e79a7;"></div><div style="left:3116px;top:1624px;width:2px;height:8px;background:#ededed;"></div><div style="left:3162px;top:1339.5px;width:30px;height:281.5px;background:#4e79a7;"></div><div style="left:3156px;top:1624px;width:2px;height:8px;background:#ededed;"></div><div style="left:3202px;top:1339.5px;width:30px;height:281.5px;background:#4e79a7;"></div><div style="left:3196px;top:1624px;width:2px;height:8px;background:#ededed;"></div><div style="left:3242px;top:1339.5px;width:30px;height:281.5px;background:#4e79a7;"></div><div style="left:3236px;top:1624px;width:2px;height:8px;background:#ededed;"></div><div style="left:3282px;top:1339.5px;width:30px;height:281.5px;background:#4e79a7;"></div><div style="left:3276px;top:1624px;width:2px;height:8px;background:#ededed;"></div><div style="left:3322px;top:1339.5px;width:30px;height:281.5px;background:#4e79a7;"></div><div style="left:3316px;top:1624px;width:2px;height:8px;background:#ededed;"></div><div style="left:3362px;top:1339.5px;width:30px;height:281.5px;background:#4e79a7;"></div><div style="left:3356px;top:1624px;width:2px;height:8px;background:#ededed;"></div><div style="left:3402px;top:1339.5px;width:24px;height:281.5px;background:#4e79a7;"></div><div style="left:3396px;top:1624px;width:2px;height:8px;background:#ededed;"></div><div style="left:0;top:0;width:3426px;height:2040px;overflow:hidden;"><div class="lab" style="left:885.1px;top:1964.0px;width:334.9px;height:26px;font-size:25.3px;line-height:25.3px;color:#666;white-space:nowrap;transform-origin:0 0;transform:rotate(-90deg) scaleX(1.0033);">Charming West Village studio</div><div class="lab" style="left:925.1px;top:1910.0px;width:279.6px;height:26px;font-size:25.3px;line-height:25.3px;color:#666;white-space:nowrap;transform-origin:0 0;transform:rotate(-90deg) scaleX(1.0088);">Private room in Brooklyn</div><div class="lab" style="left:965.1px;top:1925.6px;width:320.3px;height:26px;font-size:25.3px;line-height:25.3px;color:#666;white-space:nowrap;transform-origin:0 0;transform:rotate(-90deg) scaleX(0.9283);">HOME AWAY FROM HOME</div><div class="lab" style="left:1005.1px;top:1987.8px;width:385.0px;height:26px;font-size:25.3px;line-height:25.3px;color:#666;white-space:nowrap;transform-origin:0 0;transform:rotate(-90deg) scaleX(0.9339);">Private Room in WILLIAMSBURG</div><div class="lab" style="left:1045.1px;top:1987.8px;width:378.0px;height:26px;font-size:25.3px;line-height:25.3px;color:#666;white-space:nowrap;transform-origin:0 0;transform:rotate(-90deg) scaleX(0.9514);">Loft Suite @ The Box House Ho..</div><div class="lab" style="left:1085.1px;top:1781.5px;width:157.3px;height:26px;font-size:25.3px;line-height:25.3px;color:#666;white-space:nowrap;transform-origin:0 0;transform:rotate(-90deg) scaleX(0.9755);">Private Room</div><div class="lab" style="left:1125.1px;top:1854.0px;width:229.9px;height:26px;font-size:25.3px;line-height:25.3px;color:#666;white-space:nowrap;transform-origin:0 0;transform:rotate(-90deg) scaleX(0.9827);">Wen Xin Hostel (50)</div><div class="lab" style="left:1165.1px;top:1854.0px;width:229.9px;height:26px;font-size:25.3px;line-height:25.3px;color:#666;white-space:nowrap;transform-origin:0 0;transform:rotate(-90deg) scaleX(0.9827);">Wen Xin Hostel (35)</div><div class="lab" style="left:1205.1px;top:1984.6px;width:356.9px;height:26px;font-size:25.3px;line-height:25.3px;color:#666;white-space:nowrap;transform-origin:0 0;transform:rotate(-90deg) scaleX(0.9992);">Private Room in Williamsburg ..</div><div class="lab" style="left:1245.1px;top:1892.6px;width:259.5px;height:26px;font-size:25.3px;line-height:25.3px;color:#666;white-space:nowrap;transform-origin:0 0;transform:rotate(-90deg) scaleX(1.0200);">East Village Apartment</div><div class="lab" style="left:1285.1px;top:1986.5px;width:361.2px;height:26px;font-size:25.3px;line-height:25.3px;color:#666;white-space:nowrap;transform-origin:0 0;transform:rotate(-90deg) scaleX(0.9925);">Spacious 1 Bedroom Apartment</div><div class="lab" style="left:1325.1px;top:1933.6px;width:300.7px;height:26px;font-size:25.3px;line-height:25.3px;color:#666;white-space:nowrap;transform-origin:0 0;transform:rotate(-90deg) scaleX(1.0165);">Private room in Manhattan</div><div class="lab" style="left:1365.1px;top:1853.0px;width:222.4px;height:26px;font-size:25.3px;line-height:25.3px;color:#666;white-space:nowrap;transform-origin:0 0;transform:rotate(-90deg) scaleX(1.0117);">West Village Studio</div><div class="lab" style="left:1405.1px;top:1887.0px;width:267.0px;height:26px;font-size:25.3px;line-height:25.3px;color:#666;white-space:nowrap;transform-origin:0 0;transform:rotate(-90deg) scaleX(0.9696);">Upper East Side Studio</div><div class="lab" style="left:1445.1px;top:1864.8px;width:238.8px;height:26px;font-size:25.3px;line-height:25.3px;color:#666;white-space:nowrap;transform-origin:0 0;transform:rotate(-90deg) scaleX(0.9915);">The Brooklyn Riviera</div><div class="lab" style="left:1485.1px;top:1932.0px;width:299.3px;height:26px;font-size:25.3px;line-height:25.3px;color:#666;white-space:nowrap;transform-origin:0 0;transform:rotate(-90deg) scaleX(1.0159);">spacious studio apartment</div><div class="lab" style="left:1525.1px;top:1808.0px;width:182.6px;height:26px;font-size:25.3px;line-height:25.3px;color:#666;white-space:nowrap;transform-origin:0 0;transform:rotate(-90deg) scaleX(0.9854);">Spacious studio</div><div class="lab" style="left:1565.1px;top:1915.0px;width:288.0px;height:26px;font-size:25.3px;line-height:25.3px;color:#666;white-space:nowrap;transform-origin:0 0;transform:rotate(-90deg) scaleX(0.9964);">Private room in Bushwick</div><div class="lab" style="left:1605.1px;top:1987.8px;width:362.5px;height:26px;font-size:25.3px;line-height:25.3px;color:#666;white-space:nowrap;transform-origin:0 0;transform:rotate(-90deg) scaleX(0.9924);">Private Bedroom in Williamsbu..</div><div class="lab" style="left:1645.1px;top:1853.0px;width:246.3px;height:26px;font-size:25.3px;line-height:25.3px;color:#666;white-space:nowrap;transform-origin:0 0;transform:rotate(-90deg) scaleX(0.9123);">PRIVATE BEDROOM</div><div class="lab" style="left:1685.1px;top:1986.5px;width:361.1px;height:26px;font-size:25.3px;line-height:25.3px;color:#666;white-space:nowrap;transform-origin:0 0;transform:rotate(-90deg) scaleX(0.9928);">Cozy room in heart of Williams..</div><div class="lab" style="left:1725.1px;top:1884.6px;width:268.3px;height:26px;font-size:25.3px;line-height:25.3px;color:#666;white-space:nowrap;transform-origin:0 0;transform:rotate(-90deg) scaleX(0.9556);">Cozy Room in Brooklyn</div><div class="lab" style="left:1765.1px;top:1839.7px;width:221.9px;height:26px;font-size:25.3px;line-height:25.3px;color:#666;white-space:nowrap;transform-origin:0 0;transform:rotate(-90deg) scaleX(0.9531);">Cozy Private Room</div><div class="lab" style="left:1805.1px;top:1987.8px;width:361.6px;height:26px;font-size:25.3px;line-height:25.3px;color:#666;white-space:nowrap;transform-origin:0 0;transform:rotate(-90deg) scaleX(0.9949);">Charming West Village Apartm..</div><div class="lab" style="left:1845.1px;top:1976.0px;width:347.1px;height:26px;font-size:25.3px;line-height:25.3px;color:#666;white-space:nowrap;transform-origin:0 0;transform:rotate(-90deg) scaleX(1.0025);">Beautiful One Bedroom Apart..</div><div class="lab" style="left:1885.1px;top:1983.9px;width:348.5px;height:26px;font-size:25.3px;line-height:25.3px;color:#666;white-space:nowrap;transform-origin:0 0;transform:rotate(-90deg) scaleX(1.0214);">Beautiful Brooklyn Brownstone</div><div class="lab" style="left:1925.1px;top:1901.8px;width:266.0px;height:26px;font-size:25.3px;line-height:25.3px;color:#666;white-space:nowrap;transform-origin:0 0;transform:rotate(-90deg) scaleX(1.0297);">West Village Apartment</div><div class="lab" style="left:1965.1px;top:1853.0px;width:229.9px;height:26px;font-size:25.3px;line-height:25.3px;color:#666;white-space:nowrap;transform-origin:0 0;transform:rotate(-90deg) scaleX(0.9783);">Wen Xin Hostel (80)</div><div class="lab" style="left:2005.1px;top:1802.6px;width:177.0px;height:26px;font-size:25.3px;line-height:25.3px;color:#666;white-space:nowrap;transform-origin:0 0;transform:rotate(-90deg) scaleX(0.9862);">upper east side</div><div class="lab" style="left:2045.1px;top:1987.8px;width:359.7px;height:26px;font-size:25.3px;line-height:25.3px;color:#666;white-space:nowrap;transform-origin:0 0;transform:rotate(-90deg) scaleX(1.0002);">Spacious Williamsburg apartm..</div><div class="lab" style="left:2085.1px;top:1987.8px;width:369.6px;height:26px;font-size:25.3px;line-height:25.3px;color:#666;white-space:nowrap;transform-origin:0 0;transform:rotate(-90deg) scaleX(0.9732);">Spacious Private Room in Broo..</div><div class="lab" style="left:2125.1px;top:1986.5px;width:375.2px;height:26px;font-size:25.3px;line-height:25.3px;color:#666;white-space:nowrap;transform-origin:0 0;transform:rotate(-90deg) scaleX(0.9551);">Private Room in PRIME WILLIA..</div><div class="lab" style="left:2165.1px;top:1946.8px;width:324.1px;height:26px;font-size:25.3px;line-height:25.3px;color:#666;white-space:nowrap;transform-origin:0 0;transform:rotate(-90deg) scaleX(0.9833);">Private Room in East Village</div><div class="lab" style="left:2205.1px;top:1911.0px;width:283.8px;height:26px;font-size:25.3px;line-height:25.3px;color:#666;white-space:nowrap;transform-origin:0 0;transform:rotate(-90deg) scaleX(0.9970);">One Bedroom Apartment</div><div class="lab" style="left:2245.1px;top:1945.5px;width:331.7px;height:26px;font-size:25.3px;line-height:25.3px;color:#666;white-space:nowrap;transform-origin:0 0;transform:rotate(-90deg) scaleX(0.9568);">Cozy Upper East Side Studio</div><div class="lab" style="left:2285.1px;top:1929.6px;width:304.8px;height:26px;font-size:25.3px;line-height:25.3px;color:#666;white-space:nowrap;transform-origin:0 0;transform:rotate(-90deg) scaleX(0.9892);">Cozy room in Williamsburg</div><div class="lab" style="left:2325.1px;top:1982.5px;width:355.1px;height:26px;font-size:25.3px;line-height:25.3px;color:#666;white-space:nowrap;transform-origin:0 0;transform:rotate(-90deg) scaleX(0.9984);">Charming East Village Apartm..</div><div class="lab" style="left:2365.1px;top:1966.7px;width:331.6px;height:26px;font-size:25.3px;line-height:25.3px;color:#666;white-space:nowrap;transform-origin:0 0;transform:rotate(-90deg) scaleX(1.0216);">charming brooklyn apartment</div><div class="lab" style="left:2405.1px;top:1987.8px;width:355.5px;height:26px;font-size:25.3px;line-height:25.3px;color:#666;white-space:nowrap;transform-origin:0 0;transform:rotate(-90deg) scaleX(1.0121);">Bedroom with private bathroom</div><div class="lab" style="left:2445.1px;top:1987.8px;width:351.4px;height:26px;font-size:25.3px;line-height:25.3px;color:#666;white-space:nowrap;transform-origin:0 0;transform:rotate(-90deg) scaleX(1.0243);">beautiful brownstone apartme..</div><div class="lab" style="left:2485.1px;top:1987.8px;width:352.8px;height:26px;font-size:25.3px;line-height:25.3px;color:#666;white-space:nowrap;transform-origin:0 0;transform:rotate(-90deg) scaleX(1.0202);">Beautiful 2 bedroom Apartment</div><div class="lab" style="left:2525.1px;top:1876.7px;width:245.9px;height:26px;font-size:25.3px;line-height:25.3px;color:#666;white-space:nowrap;transform-origin:0 0;transform:rotate(-90deg) scaleX(1.0117);">1 bedroom apartment</div><div class="lab" style="left:2565.1px;top:1969.3px;width:332.1px;height:26px;font-size:25.3px;line-height:25.3px;color:#666;white-space:nowrap;transform-origin:0 0;transform:rotate(-90deg) scaleX(1.0281);">Wall Street Luxury Apartment</div><div class="lab" style="left:2605.1px;top:1946.8px;width:318.9px;height:26px;font-size:25.3px;line-height:25.3px;color:#666;white-space:nowrap;transform-origin:0 0;transform:rotate(-90deg) scaleX(0.9996);">Sunny room in Williamsburg</div><div class="lab" style="left:2645.1px;top:1987.8px;width:368.2px;height:26px;font-size:25.3px;line-height:25.3px;color:#666;white-space:nowrap;transform-origin:0 0;transform:rotate(-90deg) scaleX(0.9770);">Sunny Private Room in Brooklyn</div><div class="lab" style="left:2685.1px;top:1987.8px;width:361.1px;height:26px;font-size:25.3px;line-height:25.3px;color:#666;white-space:nowrap;transform-origin:0 0;transform:rotate(-90deg) scaleX(0.9962);">Sunny bedroom in Williamsburg</div><div class="lab" style="left:2725.1px;top:1832.6px;width:198.1px;height:26px;font-size:25.3px;line-height:25.3px;color:#666;white-space:nowrap;transform-origin:0 0;transform:rotate(-90deg) scaleX(1.0336);">Studio Apartment</div><div class="lab" style="left:2765.1px;top:1704.3px;width:75.7px;height:26px;font-size:25.3px;line-height:25.3px;color:#666;white-space:nowrap;transform-origin:0 0;transform:rotate(-90deg) scaleX(1.0079);">Studio</div><div class="lab" style="left:2805.1px;top:1987.6px;width:371.1px;height:26px;font-size:25.3px;line-height:25.3px;color:#666;white-space:nowrap;transform-origin:0 0;transform:rotate(-90deg) scaleX(0.9688);">Spacious Upper East Side Apar..</div><div class="lab" style="left:2845.1px;top:1928.4px;width:313.4px;height:26px;font-size:25.3px;line-height:25.3px;color:#666;white-space:nowrap;transform-origin:0 0;transform:rotate(-90deg) scaleX(0.9580);">Spacious Studio in Chelsea</div><div class="lab" style="left:2885.1px;top:1983.0px;width:361.1px;height:26px;font-size:25.3px;line-height:25.3px;color:#666;white-space:nowrap;transform-origin:0 0;transform:rotate(-90deg) scaleX(0.9828);">Spacious Room in Williamsburg</div><div class="lab" style="left:2925.1px;top:1887.3px;width:268.4px;height:26px;font-size:25.3px;line-height:25.3px;color:#666;white-space:nowrap;transform-origin:0 0;transform:rotate(-90deg) scaleX(0.9658);">Spacious Private Room</div><div class="lab" style="left:2965.1px;top:1987.6px;width:363.5px;height:26px;font-size:25.3px;line-height:25.3px;color:#666;white-space:nowrap;transform-origin:0 0;transform:rotate(-90deg) scaleX(0.9890);">Spacious East Village Apartme..</div><div class="lab" style="left:3005.1px;top:1914.7px;width:288.0px;height:26px;font-size:25.3px;line-height:25.3px;color:#666;white-space:nowrap;transform-origin:0 0;transform:rotate(-90deg) scaleX(0.9953);">Private room in New York</div><div class="lab" style="left:3045.1px;top:1987.6px;width:368.2px;height:26px;font-size:25.3px;line-height:25.3px;color:#666;white-space:nowrap;transform-origin:0 0;transform:rotate(-90deg) scaleX(0.9765);">Private Room in Luxury Apartm..</div><div class="lab" style="left:3085.1px;top:1987.7px;width:365.4px;height:26px;font-size:25.3px;line-height:25.3px;color:#666;white-space:nowrap;transform-origin:0 0;transform:rotate(-90deg) scaleX(0.9843);">Private room in 2 bedroom apa..</div><div class="lab" style="left:3125.1px;top:1961.0px;width:333.0px;height:26px;font-size:25.3px;line-height:25.3px;color:#666;white-space:nowrap;transform-origin:0 0;transform:rotate(-90deg) scaleX(1.0000);">Private Bedroom in Bushwick</div><div class="lab" style="left:3165.1px;top:1952.6px;width:324.6px;height:26px;font-size:25.3px;line-height:25.3px;color:#666;white-space:nowrap;transform-origin:0 0;transform:rotate(-90deg) scaleX(1.0000);">Private Bedroom in Brooklyn</div><div class="lab" style="left:3205.1px;top:1987.7px;width:369.6px;height:26px;font-size:25.3px;line-height:25.3px;color:#666;white-space:nowrap;transform-origin:0 0;transform:rotate(-90deg) scaleX(0.9729);">Newly Renovated 1 Bedroom A..</div><div class="lab" style="left:3245.1px;top:1970.9px;width:342.9px;height:26px;font-size:25.3px;line-height:25.3px;color:#666;white-space:nowrap;transform-origin:0 0;transform:rotate(-90deg) scaleX(1.0000);">Large Bedroom w/ private ba..</div><div class="lab" style="left:3285.1px;top:1987.7px;width:372.3px;height:26px;font-size:25.3px;line-height:25.3px;color:#666;white-space:nowrap;transform-origin:0 0;transform:rotate(-90deg) scaleX(0.9658);">Loft w/ Terrace @ Box House H..</div><div class="lab" style="left:3325.1px;top:1968.5px;width:340.5px;height:26px;font-size:25.3px;line-height:25.3px;color:#666;white-space:nowrap;transform-origin:0 0;transform:rotate(-90deg) scaleX(1.0000);">Loft Suite @ Box House Hotel</div><div class="lab" style="left:3365.1px;top:1984.9px;width:356.9px;height:26px;font-size:25.3px;line-height:25.3px;color:#666;white-space:nowrap;transform-origin:0 0;transform:rotate(-90deg) scaleX(1.0000);">Cozy Sunny Room in Williams..</div><div class="lab" style="left:3405.1px;top:1939.9px;width:311.9px;height:26px;font-size:25.3px;line-height:25.3px;color:#666;white-space:nowrap;transform-origin:0 0;transform:rotate(-90deg) scaleX(1.0000);">Large room in Williamsburg</div></div><div style="left:792.0px;top:1159px;font-size:24.4px;line-height:24.4px;color:#333;white-space:nowrap;transform-origin:0 0;transform:rotate(-90deg);">Number of Records</div><svg style="position:absolute;left:792px;top:916px;" width="21" height="21" viewBox="0 0 21 21"><rect x="0" y="0" width="4.5" height="20" fill="#555"/><rect x="8" y="8" width="4.5" height="12" fill="#555"/><rect x="16" y="14" width="4.5" height="6" fill="#555"/></svg><div style="left:876px;top:2002px;width:2566px;height:31px;background:#fcfcfc;border-top:1px solid #e6e6e6;border-bottom:1px solid #e6e6e6;"></div><div style="left:883px;top:2012px;width:35px;height:16px;background:#6e6e6e;border-radius:8px;"></div><div style="left:0px;top:2058px;width:3455px;height:61px;background:#e6e6e6;border-top:2px solid #cfcfcf;"></div><svg style="position:absolute;left:20px;top:2079px;overflow:visible;" width="18" height="22" viewBox="0 0 18 22"><ellipse cx="8.5" cy="4" rx="7" ry="3" fill="none" stroke="#666" stroke-width="2"/><path d="M1.5 4 L1.5 16 Q1.5 19.5 8.5 19.5 Q15.5 19.5 15.5 16 L15.5 4" fill="none" stroke="#666" stroke-width="2"/></svg><div style="left:49px;top:2077.5px;font-size:25px;line-height:25px;color:#555;white-space:nowrap;letter-spacing:-0.3px;">Data Source</div><div style="left:261px;top:2060px;width:133px;height:59px;background:#f8f8f8;"></div><div style="left:275px;top:2078.3px;font-size:24px;line-height:24px;color:#555;font-weight:bold;white-space:nowrap;">Bar chart</div><div style="left:260px;top:2060px;width:2px;height:59px;background:#cfcfcf;"></div><div style="left:393px;top:2060px;width:2px;height:59px;background:#cfcfcf;"></div><div style="left:533px;top:2060px;width:2px;height:59px;background:#cfcfcf;"></div><div style="left:661px;top:2060px;width:2px;height:59px;background:#cfcfcf;"></div><div style="left:825px;top:2060px;width:2px;height:59px;background:#cfcfcf;"></div><div style="left:888px;top:2060px;width:2px;height:59px;background:#cfcfcf;"></div><div style="left:952px;top:2060px;width:2px;height:59px;background:#cfcfcf;"></div><div style="left:406px;top:2077.5px;font-size:25px;line-height:25px;color:#555;white-space:nowrap;letter-spacing:-0.3px;">Line chart</div><div style="left:547px;top:2077.5px;font-size:25px;line-height:25px;color:#555;white-space:nowrap;letter-spacing:-0.3px;">Pie chart</div><div style="left:675px;top:2077.5px;font-size:25px;line-height:25px;color:#555;white-space:nowrap;">Scatter plot</div><svg style="position:absolute;left:842px;top:2074px;overflow:visible;" width="34" height="34" viewBox="0 0 34 34"><rect x="1" y="2" width="22" height="20" rx="1" fill="none" stroke="#666" stroke-width="2"/><rect x="6" y="12" width="2.5" height="7" fill="#666"/><rect x="11" y="7" width="2.5" height="12" fill="#666"/><rect x="16" y="10" width="2.5" height="9" fill="#666"/><rect x="17" y="21.25" width="12" height="3.5" fill="#555"/><rect x="21.25" y="17" width="3.5" height="12" fill="#555"/></svg><svg style="position:absolute;left:906px;top:2074px;overflow:visible;" width="34" height="34" viewBox="0 0 34 34"><rect x="1" y="2" width="22" height="20" rx="1" fill="none" stroke="#666" stroke-width="2"/><path d="M1 12 L23 12 M12 2 L12 22" stroke="#666" stroke-width="2"/><rect x="17" y="21.25" width="12" height="3.5" fill="#555"/><rect x="21.25" y="17" width="3.5" height="12" fill="#555"/></svg><svg style="position:absolute;left:970px;top:2074px;overflow:visible;" width="34" height="34" viewBox="0 0 34 34"><path d="M1 4 L9 1 L15 4 L23 1 L23 20 L15 23 L9 20 L1 23 Z" fill="none" stroke="#666" stroke-width="2" stroke-linejoin="round"/><rect x="17" y="21.25" width="12" height="3.5" fill="#555"/><rect x="21.25" y="17" width="3.5" height="12" fill="#555"/></svg><div style="left:0px;top:2118px;width:3455px;height:42px;background:#ececec;border-top:2px solid #d2d2d2;"></div><div style="left:25px;top:2129.4px;font-size:21.5px;line-height:21.5px;color:#222;white-space:nowrap;">29416 marks</div><div style="left:184px;top:2129.4px;font-size:21.5px;line-height:21.5px;color:#222;white-space:nowrap;">1 row by 29416 columns</div><div style="left:446px;top:2129.4px;font-size:21.5px;line-height:21.5px;color:#222;white-space:nowrap;letter-spacing:-0.45px;">SUM(Number of Records): 30,478</div><div style="left:2958px;top:2120px;width:2px;height:40px;background:#d0d0d0;"></div><div style="left:3012px;top:2120px;width:2px;height:40px;background:#d0d0d0;"></div><div style="left:3066px;top:2120px;width:2px;height:40px;background:#d0d0d0;"></div><div style="left:3160px;top:2120px;width:2px;height:40px;background:#d0d0d0;"></div><div style="left:3301px;top:2120px;width:2px;height:40px;background:#d0d0d0;"></div><svg style="position:absolute;left:3178px;top:2128px;overflow:visible;" width="112" height="22" viewBox="0 0 112 22"><rect x="0" y="1" width="2" height="19" fill="#b4b4b4"/><path d="M3 10.5 L12 2 L12 19 Z" fill="#b4b4b4"/><path d="M34 10.5 L43 2 L43 19 Z" fill="#b4b4b4"/><path d="M67 2 L76 10.5 L67 19 Z" fill="#b4b4b4"/><path d="M96 2 L105 10.5 L96 19 Z" fill="#b4b4b4"/><rect x="105" y="1" width="2" height="19" fill="#b4b4b4"/></svg><svg style="position:absolute;left:3321px;top:2137px;overflow:visible;" width="24" height="16" viewBox="0 0 24 16"><rect x="0" y="0" width="6.3" height="6.3" fill="#c4c4c4"/><rect x="0" y="8" width="6.3" height="6.3" fill="#c4c4c4"/><rect x="8" y="0" width="6.3" height="6.3" fill="#c4c4c4"/><rect x="8" y="8" width="6.3" height="6.3" fill="#c4c4c4"/><rect x="16" y="0" width="6.3" height="6.3" fill="#c4c4c4"/><rect x="16" y="8" width="6.3" height="6.3" fill="#c4c4c4"/></svg><svg style="position:absolute;left:3363px;top:2137px;overflow:visible;" width="24" height="16" viewBox="0 0 24 16"><rect x="0" y="0" width="22.3" height="6.3" fill="#c4c4c4"/><rect x="0" y="8" width="6.3" height="6.3" fill="#c4c4c4"/><rect x="8" y="8" width="6.3" height="6.3" fill="#c4c4c4"/><rect x="16" y="8" width="6.3" height="6.3" fill="#c4c4c4"/></svg><svg style="position:absolute;left:3405px;top:2133px;overflow:visible;" width="22" height="18" viewBox="0 0 22 18"><rect x="0" y="0" width="22" height="18" fill="#616161"/></svg></div></div>
<div style="position:absolute;left:3070px;top:1896.5px;width:362px;height:239.5px;background:#000;border-radius:10px;box-shadow:0 1px 6px rgba(0,0,0,0.3),0 0 50px rgba(0,0,0,0.13);will-change:transform;">
<div style="position:absolute;left:8px;top:8px;width:345.7px;height:223px;overflow:hidden;background:#fff;">
<div style="position:absolute;left:0;top:0;width:345.7px;height:7px;background:#7a6b9e;"><div style="position:absolute;left:5px;top:2.6px;width:2px;height:2.4px;background:rgba(255,255,255,0.4);"></div><div style="position:absolute;left:11.7px;top:2.6px;width:18.3px;height:2.4px;background:rgba(255,255,255,0.4);"></div><div style="position:absolute;left:35px;top:2.6px;width:3.8px;height:2.4px;background:rgba(255,255,255,0.4);"></div><div style="position:absolute;left:44px;top:2.6px;width:5.9px;height:2.4px;background:rgba(255,255,255,0.4);"></div><div style="position:absolute;left:55px;top:2.6px;width:13.2px;height:2.4px;background:rgba(255,255,255,0.4);"></div><div style="position:absolute;left:72.6px;top:2.6px;width:14px;height:2.4px;background:rgba(255,255,255,0.4);"></div><div style="position:absolute;left:91px;top:2.6px;width:7.3px;height:2.4px;background:rgba(255,255,255,0.4);"></div><div style="position:absolute;left:102.7px;top:2.6px;width:10.3px;height:2.4px;background:rgba(255,255,255,0.4);"></div><div style="position:absolute;left:117.7px;top:2.6px;width:5.6px;height:2.4px;background:rgba(255,255,255,0.4);"></div><div style="position:absolute;left:128px;top:2.6px;width:9.2px;height:2.4px;background:rgba(255,255,255,0.4);"></div><div style="position:absolute;left:141.6px;top:2.6px;width:8.1px;height:2.4px;background:rgba(255,255,255,0.4);"></div><div style="position:absolute;left:196px;top:2.6px;width:9.5px;height:2.4px;background:rgba(255,255,255,0.4);"></div><div style="position:absolute;left:210px;top:2.6px;width:6.5px;height:2.4px;background:rgba(255,255,255,0.4);"></div><div style="position:absolute;left:225px;top:2.6px;width:5px;height:2.4px;background:rgba(255,255,255,0.4);"></div><div style="position:absolute;left:231px;top:2.6px;width:4px;height:2.4px;background:rgba(255,255,255,0.4);"></div><div style="position:absolute;left:237px;top:2.6px;width:4px;height:2.4px;background:rgba(255,255,255,0.4);"></div><div style="position:absolute;left:245px;top:2.6px;width:4px;height:2.4px;background:rgba(255,255,255,0.4);"></div><div style="position:absolute;left:253px;top:2.6px;width:4px;height:2.4px;background:rgba(255,255,255,0.4);"></div><div style="position:absolute;left:260px;top:2.6px;width:3px;height:2.4px;background:rgba(255,255,255,0.4);"></div><div style="position:absolute;left:266px;top:2.6px;width:6px;height:2.4px;background:rgba(255,255,255,0.4);"></div><div style="position:absolute;left:276px;top:2.6px;width:4px;height:2.4px;background:rgba(255,255,255,0.4);"></div><div style="position:absolute;left:283px;top:2.6px;width:5px;height:2.4px;background:rgba(255,255,255,0.4);"></div><div style="position:absolute;left:292px;top:2.6px;width:4px;height:2.4px;background:rgba(255,255,255,0.4);"></div><div style="position:absolute;left:299px;top:2.6px;width:4px;height:2.4px;background:rgba(255,255,255,0.4);"></div><div style="position:absolute;left:305px;top:2.6px;width:4px;height:2.4px;background:rgba(255,255,255,0.4);"></div><div style="position:absolute;left:311px;top:2.6px;width:4px;height:2.4px;background:rgba(255,255,255,0.4);"></div><div style="position:absolute;left:320px;top:2.6px;width:23px;height:2.4px;background:rgba(255,255,255,0.4);"></div></div>
<div class="win thumbwin" style="position:absolute;left:0;top:7px;width:3455px;height:2160px;transform:scale(0.1);transform-origin:0 0;overflow:hidden;"><div style="left:0px;top:0px;width:3455px;height:58px;background:#f2f2f2;"></div><div style="left:0px;top:2px;width:3455px;height:1px;background:#fbfbfb;"></div><div style="left:16px;top:18px;width:24px;height:24px;background:#ed6a5f;border-radius:50%;border:1px solid #d5574c;"></div><div style="left:56px;top:18px;width:24px;height:24px;background:#f5be4f;border-radius:50%;border:1px solid #d9a33a;"></div><div style="left:96px;top:18px;width:24px;height:24px;background:#61c554;border-radius:50%;border:1px solid #4ea83f;"></div><svg style="position:absolute;left:1557px;top:13px;overflow:visible;box-shadow:0 1px 1px rgba(0,0,0,0.15);" width="29" height="29" viewBox="0 0 29 29"><rect x="0.5" y="0.5" width="28" height="28" fill="#f7f9fb" stroke="#d0d0d0" stroke-width="1"/><rect x="9.5" y="13.8" width="10" height="1.4" fill="#4a86c0"/><rect x="13.8" y="9.5" width="1.4" height="10" fill="#4a86c0"/><rect x="5.5" y="8.3" width="7.0" height="1.4" fill="#4a86c0"/><rect x="8.3" y="5.5" width="1.4" height="7.0" fill="#4a86c0"/><rect x="16.5" y="8.3" width="7.0" height="1.4" fill="#4a86c0"/><rect x="19.3" y="5.5" width="1.4" height="7.0" fill="#4a86c0"/><rect x="5.5" y="19.3" width="7.0" height="1.4" fill="#4a86c0"/><rect x="8.3" y="16.5" width="1.4" height="7.0" fill="#4a86c0"/><rect x="16.5" y="19.3" width="7.0" height="1.4" fill="#4a86c0"/><rect x="19.3" y="16.5" width="1.4" height="7.0" fill="#4a86c0"/><rect x="12.0" y="3.8" width="5.0" height="1.4" fill="#4a86c0"/><rect x="13.8" y="2.0" width="1.4" height="5.0" fill="#4a86c0"/><rect x="12.0" y="23.8" width="5.0" height="1.4" fill="#4a86c0"/><rect x="13.8" y="22.0" width="1.4" height="5.0" fill="#4a86c0"/><rect x="2.0" y="13.8" width="5.0" height="1.4" fill="#4a86c0"/><rect x="3.8" y="12.0" width="1.4" height="5.0" fill="#4a86c0"/><rect x="22.0" y="13.8" width="5.0" height="1.4" fill="#4a86c0"/><rect x="23.8" y="12.0" width="1.4" height="5.0" fill="#4a86c0"/></svg><div style="left:1597px;top:15.3px;font-size:27px;line-height:27px;color:#3c3c3c;font-weight:bold;white-space:nowrap;">Tableau Public - airbnb</div><div style="left:0px;top:58px;width:3455px;height:80px;background:#cfe9fd;"></div><div style="left:0px;top:58px;width:3455px;height:1px;background:#a9c6de;"></div><svg style="position:absolute;left:50px;top:86px;overflow:visible;" width="25" height="25" viewBox="0 0 25 25"><rect x="1.1" y="6.9" width="9.8" height="7.8" rx="1.3" fill="none" stroke="#1a68a0" stroke-width="1.8"/><path d="M10.9 6.9 L13.6 6.9 L19.6 1.6 Q20.6 1 20.6 2.4 L20.6 19.4 Q20.6 20.8 19.6 20.1 L13.6 14.7 L10.9 14.7" fill="none" stroke="#1a68a0" stroke-width="1.8" stroke-linejoin="round"/><rect x="4.1" y="14.5" width="3.7" height="9.3" rx="1.85" fill="#1a68a0"/><path d="M21.4 8 Q24.2 8 24.2 11 Q24.2 13.9 21.4 13.9 Z" fill="#1a68a0"/></svg><div style="left:105px;top:86.3px;font-size:24.6px;line-height:24.6px;color:#1a6b9b;white-space:nowrap;">Tableau Desktop Public Edition</div><div style="left:3202px;top:85.3px;font-size:24.6px;line-height:24.6px;color:#1a6b9b;white-space:nowrap;">Buy Tableau</div><div style="left:0px;top:138px;width:3455px;height:80px;background:#f5f5f5;"></div><div style="left:94px;top:144px;width:2px;height:69px;background:#d0d0d0;"></div><div style="left:458px;top:144px;width:2px;height:69px;background:#d0d0d0;"></div><div style="left:710px;top:144px;width:2px;height:69px;background:#d0d0d0;"></div><div style="left:930px;top:144px;width:2px;height:69px;background:#d0d0d0;"></div><div style="left:1472px;top:144px;width:2px;height:69px;background:#d0d0d0;"></div><div style="left:1644px;top:144px;width:2px;height:69px;background:#d0d0d0;"></div><svg style="position:absolute;left:28px;top:158px;overflow:visible;" width="40" height="40" viewBox="0 0 40 40"><rect x="14" y="18.9" width="12" height="2.2" fill="#e8762b"/><rect x="18.9" y="14" width="2.2" height="12" fill="#e8762b"/><rect x="7" y="11.0" width="10" height="2" fill="#f08b2c"/><rect x="11.0" y="7" width="2" height="10" fill="#f08b2c"/><rect x="23" y="11.0" width="10" height="2" fill="#5b8a9d"/><rect x="27.0" y="7" width="2" height="10" fill="#5b8a9d"/><rect x="17" y="6.2" width="6" height="1.6" fill="#729ba7"/><rect x="19.2" y="4" width="1.6" height="6" fill="#729ba7"/><rect x="4" y="19.2" width="6" height="1.6" fill="#729ba7"/><rect x="6.2" y="17" width="1.6" height="6" fill="#729ba7"/><rect x="30" y="19.2" width="6" height="1.6" fill="#5d6aa0"/><rect x="32.2" y="17" width="1.6" height="6" fill="#5d6aa0"/><rect x="7" y="27.0" width="10" height="2" fill="#c8203a"/><rect x="11.0" y="23" width="2" height="10" fill="#c8203a"/><rect x="23" y="27.0" width="10" height="2" fill="#1e4a82"/><rect x="27.0" y="23" width="2" height="10" fill="#1e4a82"/><rect x="17" y="32.2" width="6" height="1.6" fill="#8e8ac0"/><rect x="19.2" y="30" width="1.6" height="6" fill="#8e8ac0"/></svg><svg style="position:absolute;left:118px;top:158px;overflow:visible;" width="44" height="40" viewBox="0 0 44 40"><path d="M21 5.6 L5.6 20 L21 34.6 M5.6 20 L38.4 20" fill="none" stroke="#666" stroke-width="3.6" stroke-linecap="round" stroke-linejoin="round"/></svg><svg style="position:absolute;left:182px;top:158px;overflow:visible;" width="44" height="40" viewBox="0 0 44 40"><path d="M22.8 5.6 L38.2 20 L22.8 34.6 M38.2 20 L6 20" fill="none" stroke="#b2b2b2" stroke-width="3.6" stroke-linecap="round" stroke-linejoin="round"/></svg><svg style="position:absolute;left:240px;top:162px;overflow:visible;" width="48" height="26" viewBox="0 0 48 26"><path d="M32 9.8 L11 9.8 Q4.4 9.8 4.4 15.8 Q4.4 21.8 11 21.8 L37 21.8 Q43.3 21.8 43.3 15.8 Q43.3 12 40 10" fill="none" stroke="#b2b2b2" stroke-width="2"/><path d="M31 5 L36 9.8 L31 15 Z" fill="#b2b2b2"/></svg><svg style="position:absolute;left:299.8px;top:175.88px;overflow:visible;" width="10.4" height="6.24" viewBox="0 0 10.4 6.24"><path d="M0 0 L10.4 0 L5.2 6.24 Z" fill="#b2b2b2"/></svg><svg style="position:absolute;left:330px;top:160px;overflow:visible;" width="36" height="36" viewBox="0 0 36 36"><rect x="3" y="3" width="30.5" height="30.5" rx="1.5" fill="none" stroke="#5a5a5a" stroke-width="2.2"/><path d="M8 33.5 L8 23.5 L23 23.5 L23 33.5" fill="none" stroke="#5a5a5a" stroke-width="2"/><rect x="11.5" y="27" width="4.5" height="6.5" fill="#5a5a5a"/></svg><svg style="position:absolute;left:395px;top:158px;overflow:visible;" width="36" height="42" viewBox="0 0 36 42"><path d="M4.5 9 L4.5 28 Q4.5 34.5 14 34.5 L16 34.5 M24 26 L24 9" fill="none" stroke="#666" stroke-width="2.2"/><ellipse cx="14.2" cy="9" rx="9.8" ry="5" fill="none" stroke="#666" stroke-width="2.2"/><rect x="17" y="28.8" width="14" height="4" fill="#2e2e2e"/><rect x="22.0" y="23.8" width="4" height="14" fill="#2e2e2e"/></svg><svg style="position:absolute;left:478px;top:157px;overflow:visible;" width="46" height="46" viewBox="0 0 46 46"><rect x="3" y="3" width="31" height="31" rx="1" fill="none" stroke="#5a5a5a" stroke-width="2"/><rect x="9.3" y="20.5" width="3" height="12" fill="#5a5a5a"/><rect x="16.3" y="10" width="3" height="22.5" fill="#5a5a5a"/><rect x="23" y="15" width="3" height="17.5" fill="#5a5a5a"/><rect x="26" y="30.0" width="14" height="4" fill="#2e2e2e"/><rect x="31.0" y="25" width="4" height="14" fill="#2e2e2e"/></svg><svg style="position:absolute;left:535.8px;top:175.88px;overflow:visible;" width="10.4" height="6.24" viewBox="0 0 10.4 6.24"><path d="M0 0 L10.4 0 L5.2 6.24 Z" fill="#666"/></svg><svg style="position:absolute;left:563px;top:157px;overflow:visible;" width="44" height="40" viewBox="0 0 44 40"><rect x="13" y="3" width="25.5" height="21.5" rx="1" fill="#f5f5f5" stroke="#5a5a5a" stroke-width="2"/><rect x="19" y="13" width="3" height="8" fill="#5a5a5a"/><rect x="25" y="8" width="3" height="13" fill="#5a5a5a"/><rect x="31" y="11" width="3" height="10" fill="#5a5a5a"/><path d="M13 16 L3 16 L3 36 L29 36 L29 24.5" fill="none" stroke="#5a5a5a" stroke-width="2"/><rect x="9" y="29" width="2.5" height="5" fill="#5a5a5a"/><rect x="15" y="29" width="2.5" height="5" fill="#5a5a5a"/><rect x="21" y="29" width="2.5" height="5" fill="#5a5a5a"/></svg><svg style="position:absolute;left:623px;top:157px;overflow:visible;" width="46" height="46" viewBox="0 0 46 46"><rect x="3" y="3" width="31" height="31" rx="1" fill="none" stroke="#5a5a5a" stroke-width="2"/><rect x="9.5" y="20.5" width="3" height="12" fill="#5a5a5a"/><rect x="16.5" y="10" width="3" height="22.5" fill="#5a5a5a"/><rect x="23.5" y="15" width="3" height="17.5" fill="#5a5a5a"/><rect x="20" y="24" width="24" height="14" fill="#f5f5f5"/><path d="M26 26 L37 37 M37 26 L26 37" stroke="#2e2e2e" stroke-width="4"/></svg><svg style="position:absolute;left:679.8px;top:175.88px;overflow:visible;" width="10.4" height="6.24" viewBox="0 0 10.4 6.24"><path d="M0 0 L10.4 0 L5.2 6.24 Z" fill="#666"/></svg><svg style="position:absolute;left:736px;top:160px;overflow:visible;" width="40" height="40" viewBox="0 0 40 40"><rect x="2" y="2" width="7" height="7" rx="1" fill="none" stroke="#5a5a5a" stroke-width="2"/><rect x="13" y="2" width="7" height="7" rx="1" fill="none" stroke="#5a5a5a" stroke-width="2"/><rect x="24" y="2" width="7" height="7" rx="1" fill="none" stroke="#5a5a5a" stroke-width="2"/><rect x="2" y="13" width="7" height="7" rx="1" fill="none" stroke="#5a5a5a" stroke-width="2"/><rect x="2" y="24" width="7" height="7" rx="1" fill="none" stroke="#5a5a5a" stroke-width="2"/><path d="M14 32 Q27 30 31 17" fill="none" stroke="#5a5a5a" stroke-width="2.2"/><path d="M26 18 L32 9.5 L36.5 19 Z" fill="#5a5a5a"/><path d="M19 27.5 L11 33 L19 37 Z" fill="#5a5a5a"/></svg><svg style="position:absolute;left:800px;top:160px;overflow:visible;" width="42" height="36" viewBox="0 0 42 36"><path d="M6 3 L6 30" stroke="#5a5a5a" stroke-width="2"/><path d="M1.5 25 L6 33 L10.5 25 Z" fill="#5a5a5a"/><rect x="13.5" y="4" width="10" height="6.2" rx="1.5" fill="none" stroke="#5a5a5a" stroke-width="2"/><rect x="13.5" y="14" width="16" height="6.2" rx="1.5" fill="none" stroke="#5a5a5a" stroke-width="2"/><rect x="13.5" y="24" width="24" height="6.2" rx="1.5" fill="none" stroke="#5a5a5a" stroke-width="2"/></svg><svg style="position:absolute;left:864px;top:160px;overflow:visible;" width="42" height="36" viewBox="0 0 42 36"><path d="M6 3 L6 30" stroke="#5a5a5a" stroke-width="2"/><path d="M1.5 25 L6 33 L10.5 25 Z" fill="#5a5a5a"/><rect x="13.5" y="4" width="24" height="6.2" rx="1.5" fill="none" stroke="#5a5a5a" stroke-width="2"/><rect x="13.5" y="14" width="15" height="6.2" rx="1.5" fill="none" stroke="#5a5a5a" stroke-width="2"/><rect x="13.5" y="24" width="9" height="6.2" rx="1.5" fill="none" stroke="#5a5a5a" stroke-width="2"/></svg><svg style="position:absolute;left:963px;top:160px;overflow:visible;" width="28" height="38" viewBox="0 0 28 38"><path d="M14.9 2.8 L20.5 6.2 L9.3 24.6 L4.3 21.8 Z" fill="none" stroke="#5a5a5a" stroke-width="1.9" stroke-linejoin="round"/><path d="M3.2 25.9 L8.5 29" stroke="#5a5a5a" stroke-width="2.2"/><path d="M2.6 29.2 L6.2 31.4 L2.6 31.6 Z" fill="#5a5a5a"/><rect x="2" y="33" width="22" height="3" fill="#5a5a5a"/></svg><svg style="position:absolute;left:1005.8px;top:174.88px;overflow:visible;" width="10.4" height="6.24" viewBox="0 0 10.4 6.24"><path d="M0 0 L10.4 0 L5.2 6.24 Z" fill="#666"/></svg><svg style="position:absolute;left:1038px;top:160px;overflow:visible;" width="30" height="36" viewBox="0 0 30 36"><g transform="translate(15,18) rotate(27) translate(-6,-15.5)"><path d="M12 22 L12 6 A6 6 0 0 0 0 6 L0 26 A4 4 0 0 0 8 26 L8 8.5 A2.5 2.5 0 0 0 3 8.5 L3 21" fill="none" stroke="#b2b2b2" stroke-width="1.9"/></g></svg><svg style="position:absolute;left:1085.8px;top:174.88px;overflow:visible;" width="10.4" height="6.24" viewBox="0 0 10.4 6.24"><path d="M0 0 L10.4 0 L5.2 6.24 Z" fill="#bdbdbd"/></svg><svg style="position:absolute;left:1117px;top:161px;overflow:visible;" width="38" height="33" viewBox="0 0 38 33"><rect x="2" y="2" width="34" height="28" fill="none" stroke="#999" stroke-width="1.5" stroke-dasharray="3 2.4"/><text x="19" y="25" text-anchor="middle" font-family="Liberation Serif" font-size="25" fill="#555">T</text></svg><svg style="position:absolute;left:1183px;top:160px;overflow:visible;" width="32" height="38" viewBox="0 0 32 38"><path d="M14 4 L27 11 L22 13.5 L19.5 22 L21.5 25.5 L9 18.5 L12.5 17 L17 10 L14 4 Z" fill="none" stroke="#5a5a5a" stroke-width="2" stroke-linejoin="round"/><path d="M13 22 L5 34" stroke="#5a5a5a" stroke-width="2"/></svg><svg style="position:absolute;left:1496px;top:161px;overflow:visible;" width="46" height="34" viewBox="0 0 46 34"><rect x="3.2" y="4.2" width="8" height="6.3" rx="1.6" fill="none" stroke="#5a5a5a" stroke-width="1.8"/><rect x="3.2" y="14.3" width="8" height="6.3" rx="1.6" fill="none" stroke="#5a5a5a" stroke-width="1.8"/><rect x="3.2" y="24.4" width="8" height="6.3" rx="1.6" fill="none" stroke="#5a5a5a" stroke-width="1.8"/><rect x="15.3" y="4.2" width="24.4" height="26" rx="1.6" fill="none" stroke="#5a5a5a" stroke-width="1.9"/><rect x="20" y="18" width="3" height="8" fill="#5a5a5a"/><rect x="26" y="8" width="3" height="18" fill="#5a5a5a"/><rect x="32" y="12" width="3" height="14" fill="#5a5a5a"/></svg><svg style="position:absolute;left:1547.8px;top:174.88px;overflow:visible;" width="10.4" height="6.24" viewBox="0 0 10.4 6.24"><path d="M0 0 L10.4 0 L5.2 6.24 Z" fill="#666"/></svg><svg style="position:absolute;left:1579px;top:162px;overflow:visible;" width="38" height="38" viewBox="0 0 38 38"><rect x="2" y="3.2" width="33.5" height="3.6" fill="#5a5a5a"/><path d="M18.5 0 L18.5 3.5"  stroke="#5a5a5a" stroke-width="2"/><path d="M5.3 6.6 L5.3 22.3 L31.8 22.3 L31.8 6.6" fill="none" stroke="#5a5a5a" stroke-width="2"/><path d="M18.5 22.3 L18.5 30 M11.5 30.9 L25.5 30.9" stroke="#5a5a5a" stroke-width="1.9"/></svg><div style="left:1249px;top:155px;width:193px;height:44px;background:#f7f7f7;border:2px solid #cfcfcf;border-radius:4px;"></div><div style="left:1403px;top:157px;width:2px;height:40px;background:#d6d6d6;"></div><div style="left:1264px;top:165.0px;font-size:25px;line-height:25px;color:#333;white-space:nowrap;">Standard</div><svg style="position:absolute;left:1420px;top:173.6px;overflow:visible;" width="18" height="10.799999999999999" viewBox="0 0 18 10.799999999999999"><path d="M0 0 L18 0 L9 10.799999999999999 Z" fill="#555"/></svg><div style="left:3258px;top:163px;width:25px;height:6px;background:#806e94;"></div><div style="left:3258px;top:171px;width:32px;height:6px;background:#81a3c9;"></div><div style="left:3258px;top:179px;width:13px;height:6px;background:#f0a479;"></div><div style="left:3258px;top:187px;width:19px;height:6px;background:#f26d7d;"></div><div style="left:3301px;top:166.4px;font-size:24.5px;line-height:24.5px;color:#222;white-space:nowrap;">Show Me</div><div style="left:0px;top:217px;width:3455px;height:2px;background:#d3d3d3;"></div><div style="left:419px;top:219px;width:3036px;height:1840px;background:#f3f3f3;"></div><div style="left:0px;top:219px;width:419px;height:1840px;background:#ffffff;"></div><div style="left:417px;top:219px;width:2px;height:1840px;background:#d2d2d2;"></div><div style="left:0px;top:219px;width:160px;height:57px;background:#f8f8f8;border-right:2px solid #d0d0d0;border-bottom:2px solid #d0d0d0;"></div><div style="left:378px;top:219px;width:39px;height:56px;background:#f4f4f4;"></div><div style="left:36px;top:235.0px;font-size:25px;line-height:25px;color:#333;white-space:nowrap;">Data</div><div style="left:183px;top:235.8px;font-size:24px;line-height:24px;color:#333;font-weight:bold;white-space:nowrap;">Analytics</div><svg style="position:absolute;left:389px;top:234px;" width="16" height="22" viewBox="0 0 16 22"><path d="M13 2 L4 11 L13 20" fill="none" stroke="#555" stroke-width="2"/></svg><div style="left:36px;top:301.8px;font-size:24px;line-height:24px;color:#333;font-weight:bold;white-space:nowrap;">Summarize</div><div style="left:36px;top:605.3px;font-size:24px;line-height:24px;color:#333;font-weight:bold;white-space:nowrap;">Model</div><div style="left:36px;top:906.8px;font-size:24px;line-height:24px;color:#333;font-weight:bold;white-space:nowrap;">Custom</div><div style="left:89px;top:361.4px;font-size:24.5px;line-height:24.5px;color:#333;white-space:nowrap;">Constant Line</div><svg style="position:absolute;left:38px;top:362px;overflow:visible;" width="28" height="26" viewBox="0 0 28 26"><rect x="4" y="8.9" width="4" height="3.9" fill="#595959"/><rect x="12" y="4.9" width="4" height="7.9" fill="#595959"/><rect x="20" y="0.9" width="4" height="11.9" fill="#595959"/><rect x="4" y="15" width="20" height="1.8" fill="#595959"/><rect x="4" y="19" width="4" height="4" fill="#595959"/><rect x="12" y="19" width="4" height="4" fill="#595959"/><rect x="20" y="19" width="4" height="4" fill="#595959"/></svg><div style="left:89px;top:401.4px;font-size:24.5px;line-height:24.5px;color:#333;white-space:nowrap;">Average Line</div><svg style="position:absolute;left:38px;top:402px;overflow:visible;" width="28" height="26" viewBox="0 0 28 26"><rect x="4" y="8.9" width="4" height="3.9" fill="#595959"/><rect x="12" y="4.9" width="4" height="7.9" fill="#595959"/><rect x="20" y="0.9" width="4" height="11.9" fill="#595959"/><rect x="4" y="15" width="20" height="1.8" fill="#595959"/><rect x="4" y="19" width="4" height="4" fill="#595959"/><rect x="12" y="19" width="4" height="4" fill="#595959"/><rect x="20" y="19" width="4" height="4" fill="#595959"/></svg><div style="left:89px;top:441.4px;font-size:24.5px;line-height:24.5px;color:#333;white-space:nowrap;">Median with Quartiles</div><svg style="position:absolute;left:38px;top:442px;overflow:visible;" width="28" height="26" viewBox="0 0 28 26"><path d="M0.8 9 L0.8 5 Q0.8 3.8 2 3.8 L26 3.8 Q27.2 3.8 27.2 5 L27.2 9 M0.8 15 L0.8 19 Q0.8 20.2 2 20.2 L26 20.2 Q27.2 20.2 27.2 19 L27.2 15" fill="none" stroke="#595959" stroke-width="1.7"/><rect x="20" y="1" width="4" height="3" fill="#595959"/><rect x="0" y="11" width="28" height="1.8" fill="#595959"/><rect x="12" y="7.2" width="4" height="1.8" fill="#595959"/><rect x="20" y="7.2" width="4" height="1.8" fill="#595959"/><rect x="4" y="15.2" width="4" height="1.8" fill="#595959"/><rect x="12" y="15.2" width="4" height="1.8" fill="#595959"/><rect x="20" y="15.2" width="4" height="1.8" fill="#595959"/><rect x="4" y="20.5" width="4" height="2.5" fill="#595959"/><rect x="12" y="20.5" width="4" height="2.5" fill="#595959"/><rect x="20" y="20.5" width="4" height="2.5" fill="#595959"/></svg><div style="left:89px;top:481.4px;font-size:24.5px;line-height:24.5px;color:#b5b5b5;white-space:nowrap;">Box Plot</div><svg style="position:absolute;left:38px;top:482px;overflow:visible;" width="28" height="26" viewBox="0 0 28 26"><rect x="9" y="1.2" width="10" height="1.6" fill="#b0b0b0"/><rect x="13.2" y="2.5" width="1.6" height="5.5" fill="#b0b0b0"/><rect x="13.2" y="16" width="1.6" height="5.5" fill="#b0b0b0"/><rect x="9" y="21" width="10" height="1.7" fill="#b0b0b0"/><rect x="6.1" y="8.3" width="15.6" height="7.2" rx="1.5" fill="none" stroke="#b0b0b0" stroke-width="1.6"/></svg><div style="left:89px;top:520.4px;font-size:24.5px;line-height:24.5px;color:#333;white-space:nowrap;">Totals</div><svg style="position:absolute;left:38px;top:521px;overflow:visible;" width="28" height="26" viewBox="0 0 28 26"><rect x="6.1" y="2.8" width="15.8" height="19.9" rx="1.8" fill="none" stroke="#595959" stroke-width="1.6"/><path d="M5.3 18 L22.7 18 L22.7 21.5 Q22.7 23.5 20.7 23.5 L7.3 23.5 Q5.3 23.5 5.3 21.5 Z" fill="#595959"/></svg><div style="left:89px;top:663.9px;font-size:24.5px;line-height:24.5px;color:#333;white-space:nowrap;">Average with 95% CI</div><svg style="position:absolute;left:38px;top:664.5px;overflow:visible;" width="28" height="26" viewBox="0 0 28 26"><path d="M0.8 9 L0.8 5 Q0.8 3.8 2 3.8 L26 3.8 Q27.2 3.8 27.2 5 L27.2 9 M0.8 15 L0.8 19 Q0.8 20.2 2 20.2 L26 20.2 Q27.2 20.2 27.2 19 L27.2 15" fill="none" stroke="#595959" stroke-width="1.7"/><rect x="20" y="1" width="4" height="3" fill="#595959"/><rect x="0" y="11" width="28" height="1.8" fill="#595959"/><rect x="12" y="7.2" width="4" height="1.8" fill="#595959"/><rect x="20" y="7.2" width="4" height="1.8" fill="#595959"/><rect x="4" y="15.2" width="4" height="1.8" fill="#595959"/><rect x="12" y="15.2" width="4" height="1.8" fill="#595959"/><rect x="20" y="15.2" width="4" height="1.8" fill="#595959"/><rect x="4" y="20.5" width="4" height="2.5" fill="#595959"/><rect x="12" y="20.5" width="4" height="2.5" fill="#595959"/><rect x="20" y="20.5" width="4" height="2.5" fill="#595959"/></svg><div style="left:89px;top:703.9px;font-size:24.5px;line-height:24.5px;color:#333;white-space:nowrap;">Median with 95% CI</div><svg style="position:absolute;left:38px;top:704.5px;overflow:visible;" width="28" height="26" viewBox="0 0 28 26"><path d="M0.8 9 L0.8 5 Q0.8 3.8 2 3.8 L26 3.8 Q27.2 3.8 27.2 5 L27.2 9 M0.8 15 L0.8 19 Q0.8 20.2 2 20.2 L26 20.2 Q27.2 20.2 27.2 19 L27.2 15" fill="none" stroke="#595959" stroke-width="1.7"/><rect x="20" y="1" width="4" height="3" fill="#595959"/><rect x="0" y="11" width="28" height="1.8" fill="#595959"/><rect x="12" y="7.2" width="4" height="1.8" fill="#595959"/><rect x="20" y="7.2" width="4" height="1.8" fill="#595959"/><rect x="4" y="15.2" width="4" height="1.8" fill="#595959"/><rect x="12" y="15.2" width="4" height="1.8" fill="#595959"/><rect x="20" y="15.2" width="4" height="1.8" fill="#595959"/><rect x="4" y="20.5" width="4" height="2.5" fill="#595959"/><rect x="12" y="20.5" width="4" height="2.5" fill="#595959"/><rect x="20" y="20.5" width="4" height="2.5" fill="#595959"/></svg><div style="left:89px;top:743.4px;font-size:24.5px;line-height:24.5px;color:#b5b5b5;white-space:nowrap;">Trend Line</div><svg style="position:absolute;left:38px;top:744px;overflow:visible;" width="28" height="26" viewBox="0 0 28 26"><path d="M3.3 1 L3.3 22.3 L24.5 22.3" fill="none" stroke="#b0b0b0" stroke-width="1.6"/><path d="M7.3 18.3 L24.5 1.7" stroke="#b0b0b0" stroke-width="1.6"/><circle cx="15.2" cy="3" r="1.6" fill="#b0b0b0"/><circle cx="8.6" cy="9" r="1.6" fill="#b0b0b0"/><circle cx="20.9" cy="15" r="1.6" fill="#b0b0b0"/></svg><div style="left:89px;top:783.4px;font-size:24.5px;line-height:24.5px;color:#b5b5b5;white-space:nowrap;">Forecast</div><svg style="position:absolute;left:38px;top:784px;overflow:visible;" width="28" height="26" viewBox="0 0 28 26"><path d="M3.6 17.5 L14 7.5 L10 3.2 L23.5 3.2 L23.5 16.5 L19.5 12.6 L9 22.8 Z" fill="none" stroke="#b0b0b0" stroke-width="1.6" stroke-linejoin="round"/></svg><div style="left:89px;top:822.9px;font-size:24.5px;line-height:24.5px;color:#333;white-space:nowrap;">Cluster</div><svg style="position:absolute;left:38px;top:823.5px;overflow:visible;" width="28" height="26" viewBox="0 0 28 26"><path d="M2.4 1 L2.4 22.2 L23.8 22.2" fill="none" stroke="#595959" stroke-width="1.7"/><path d="M4.5 20 L11 13.5 L9.3 1 M11 13.5 L23.8 13.5" fill="none" stroke="#595959" stroke-width="1.6"/><circle cx="7.9" cy="8.3" r="1.8" fill="#595959"/><circle cx="21.8" cy="4.3" r="1.8" fill="#595959"/><circle cx="17.9" cy="16.3" r="1.8" fill="#595959"/></svg><div style="left:89px;top:964.9px;font-size:24.5px;line-height:24.5px;color:#333;white-space:nowrap;">Reference Line</div><svg style="position:absolute;left:38px;top:965.5px;overflow:visible;" width="28" height="26" viewBox="0 0 28 26"><rect x="4" y="8.9" width="4" height="3.9" fill="#595959"/><rect x="12" y="4.9" width="4" height="7.9" fill="#595959"/><rect x="20" y="0.9" width="4" height="11.9" fill="#595959"/><rect x="4" y="15" width="20" height="1.8" fill="#595959"/><rect x="4" y="19" width="4" height="4" fill="#595959"/><rect x="12" y="19" width="4" height="4" fill="#595959"/><rect x="20" y="19" width="4" height="4" fill="#595959"/></svg><div style="left:89px;top:1004.4px;font-size:24.5px;line-height:24.5px;color:#333;white-space:nowrap;">Reference Band</div><svg style="position:absolute;left:38px;top:1005px;overflow:visible;" width="28" height="26" viewBox="0 0 28 26"><rect x="1" y="9.2" width="26" height="10.4" rx="1.8" fill="none" stroke="#595959" stroke-width="1.7"/><rect x="4" y="12" width="4" height="3.8" fill="#595959"/><rect x="12" y="12" width="4" height="3.8" fill="#595959"/><rect x="20" y="12" width="4" height="3.8" fill="#595959"/><rect x="12" y="6.3" width="4" height="2.5" fill="#595959"/><rect x="20" y="2" width="4" height="6.8" fill="#595959"/><rect x="4" y="20" width="4" height="3.8" fill="#595959"/><rect x="12" y="20" width="4" height="3.8" fill="#595959"/><rect x="20" y="20" width="4" height="3.8" fill="#595959"/></svg><div style="left:89px;top:1044.4px;font-size:24.5px;line-height:24.5px;color:#333;white-space:nowrap;">Distribution Band</div><svg style="position:absolute;left:38px;top:1045px;overflow:visible;" width="28" height="26" viewBox="0 0 28 26"><rect x="1" y="5.2" width="26" height="15.5" rx="1.8" fill="none" stroke="#595959" stroke-width="1.7"/><rect x="4" y="14" width="4" height="3.6" fill="#595959"/><rect x="12" y="10.2" width="4" height="7.4" fill="#595959"/><rect x="20" y="8" width="4" height="9.6" fill="#595959"/><rect x="20" y="2.3" width="4" height="2.4" fill="#595959"/><rect x="4" y="21" width="4" height="2.8" fill="#595959"/><rect x="12" y="21" width="4" height="2.8" fill="#595959"/><rect x="20" y="21" width="4" height="2.8" fill="#595959"/></svg><div style="left:89px;top:1084.4px;font-size:24.5px;line-height:24.5px;color:#b5b5b5;white-space:nowrap;">Box Plot</div><svg style="position:absolute;left:38px;top:1085px;overflow:visible;" width="28" height="26" viewBox="0 0 28 26"><rect x="9" y="1.2" width="10" height="1.6" fill="#b0b0b0"/><rect x="13.2" y="2.5" width="1.6" height="5.5" fill="#b0b0b0"/><rect x="13.2" y="16" width="1.6" height="5.5" fill="#b0b0b0"/><rect x="9" y="21" width="10" height="1.7" fill="#b0b0b0"/><rect x="6.1" y="8.3" width="15.6" height="7.2" rx="1.5" fill="none" stroke="#b0b0b0" stroke-width="1.6"/></svg><div style="left:432px;top:218px;width:308px;height:124px;background:#f9f9f9;border:2px solid #d4d4d4;"></div><div style="left:447px;top:237.0px;font-size:25px;line-height:25px;color:#333;white-space:nowrap;">Pages</div><div style="left:432px;top:354px;width:308px;height:156px;background:#f9f9f9;border:2px solid #d4d4d4;"></div><div style="left:447px;top:373.0px;font-size:25px;line-height:25px;color:#333;white-space:nowrap;">Filters</div><div style="left:432px;top:522px;width:308px;height:426px;background:#f9f9f9;border:2px solid #d4d4d4;"></div><div style="left:447px;top:542.0px;font-size:25px;line-height:25px;color:#333;white-space:nowrap;">Marks</div><div style="left:447px;top:595px;width:278px;height:40px;background:#f9f9f9;border:2px solid #d2d2d2;border-radius:3px;"></div><div style="left:688px;top:597px;width:2px;height:36px;background:#dadada;"></div><svg style="position:absolute;left:469px;top:602px;" width="22" height="24" viewBox="0 0 22 24"><rect x="0" y="9" width="2.6" height="15" fill="#444"/><rect x="6" y="3" width="2.6" height="21" fill="#444"/><rect x="12" y="0" width="2.6" height="24" fill="#444"/><rect x="18" y="6" width="2.6" height="18" fill="#444"/></svg><div style="left:507px;top:604.0px;font-size:22px;line-height:22px;color:#333;white-space:nowrap;">Automatic</div><svg style="position:absolute;left:698px;top:609.6px;overflow:visible;" width="18" height="10.799999999999999" viewBox="0 0 18 10.799999999999999"><path d="M0 0 L18 0 L9 10.799999999999999 Z" fill="#555"/></svg><div style="left:446px;top:648px;width:86px;height:84px;background:#f9f9f9;border:2px solid #d6d6d6;"></div><div style="left:446px;top:705.6px;font-size:19.5px;line-height:19.5px;color:#333;width:86px;text-align:center;white-space:nowrap;">Color</div><svg style="position:absolute;left:473px;top:663px;overflow:visible;" width="29" height="29" viewBox="0 0 29 29"><circle cx="7" cy="7" r="6.5" fill="#8b6f9f"/><circle cx="22" cy="7" r="6.5" fill="#ea6a7a"/><circle cx="7" cy="22" r="6.5" fill="#eda77f"/><circle cx="22" cy="22" r="6.5" fill="#6f9ba7"/></svg><div style="left:544px;top:648px;width:84px;height:84px;background:#f9f9f9;border:2px solid #d6d6d6;"></div><div style="left:544px;top:705.6px;font-size:19.5px;line-height:19.5px;color:#333;width:84px;text-align:center;white-space:nowrap;">Size</div><svg style="position:absolute;left:571px;top:663px;overflow:visible;" width="30" height="30" viewBox="0 0 30 30"><path d="M5.8 11 A11.3 11.3 0 1 1 19.2 24.2" fill="none" stroke="#333" stroke-width="1.9"/><circle cx="8.9" cy="21" r="7.3" fill="none" stroke="#333" stroke-width="1.9"/><path d="M7 17.8 L12.5 22.6" stroke="#333" stroke-width="1.9"/></svg><div style="left:640px;top:648px;width:86px;height:84px;background:#f9f9f9;border:2px solid #d6d6d6;"></div><div style="left:640px;top:705.6px;font-size:19.5px;line-height:19.5px;color:#333;width:86px;text-align:center;white-space:nowrap;">Label</div><svg style="position:absolute;left:668px;top:663px;overflow:visible;" width="28" height="28" viewBox="0 0 28 28"><rect x="1.5" y="1.5" width="25" height="24" fill="none" stroke="#333" stroke-width="2"/><text x="14" y="21" text-anchor="middle" font-family="Liberation Serif" font-size="22" fill="#333">T</text></svg><div style="left:446px;top:745px;width:86px;height:84px;background:#f9f9f9;border:2px solid #d6d6d6;"></div><div style="left:446px;top:802.6px;font-size:19.5px;line-height:19.5px;color:#333;width:86px;text-align:center;white-space:nowrap;">Detail</div><svg style="position:absolute;left:475px;top:760px;overflow:visible;" width="28" height="28" viewBox="0 0 28 28"><circle cx="13" cy="4" r="4" fill="#333"/><path d="M13 8 L13 16 M3 21 L3 15.5 L23 15.5 L23 21 M13 15.5 L13 21" fill="none" stroke="#333" stroke-width="1.8"/><circle cx="3" cy="24" r="2.5" fill="none" stroke="#333" stroke-width="1.6"/><circle cx="13" cy="24" r="2.5" fill="none" stroke="#333" stroke-width="1.6"/><circle cx="23" cy="24" r="2.5" fill="none" stroke="#333" stroke-width="1.6"/></svg><div style="left:544px;top:745px;width:84px;height:84px;background:#f9f9f9;border:2px solid #d6d6d6;"></div><div style="left:544px;top:802.6px;font-size:19.5px;line-height:19.5px;color:#333;width:84px;text-align:center;white-space:nowrap;">Tooltip</div><svg style="position:absolute;left:571px;top:762px;overflow:visible;" width="30" height="28" viewBox="0 0 30 28"><path d="M2 2 L28 2 L28 18 L12 18 L7 25 L7 18 L2 18 Z" fill="none" stroke="#333" stroke-width="2" stroke-linejoin="round"/></svg><div style="left:752px;top:218px;width:2691px;height:55px;background:#f9f9f9;border:2px solid #d4d4d4;"></div><div style="left:1001px;top:220px;width:2px;height:51px;background:#d8d8d8;"></div><div style="left:805px;top:234.0px;font-size:25px;line-height:25px;color:#333;white-space:nowrap;">Columns</div><svg style="position:absolute;left:767px;top:232px;overflow:visible;" width="22" height="24" viewBox="0 0 22 24"><rect x="0" y="0" width="4" height="4" fill="#4a4a4a"/><rect x="0" y="7" width="4" height="17" fill="#4a4a4a"/><rect x="8.5" y="0" width="4" height="4" fill="#4a4a4a"/><rect x="8.5" y="7" width="4" height="17" fill="#4a4a4a"/><rect x="17" y="0" width="4" height="4" fill="#4a4a4a"/><rect x="17" y="7" width="4" height="17" fill="#4a4a4a"/></svg><div style="left:752px;top:287px;width:2691px;height:55px;background:#f9f9f9;border:2px solid #d4d4d4;"></div><div style="left:1001px;top:289px;width:2px;height:51px;background:#d8d8d8;"></div><div style="left:805px;top:303.0px;font-size:25px;line-height:25px;color:#333;white-space:nowrap;">Rows</div><svg style="position:absolute;left:766px;top:302px;overflow:visible;" width="26" height="26" viewBox="0 0 26 26"><rect x="0" y="0" width="4" height="4" fill="#4a4a4a"/><rect x="7" y="0" width="17" height="4" fill="#4a4a4a"/><rect x="0" y="7" width="4" height="4" fill="#4a4a4a"/><rect x="7" y="7" width="17" height="4" fill="#4a4a4a"/><rect x="0" y="14" width="4" height="4" fill="#4a4a4a"/><rect x="7" y="14" width="17" height="4" fill="#4a4a4a"/><rect x="0" y="21" width="4" height="4" fill="#4a4a4a"/><rect x="7" y="21" width="17" height="4" fill="#4a4a4a"/></svg><div style="left:1008px;top:226px;width:296px;height:40px;background:#4c96b5;border-radius:20px;"></div><div style="left:1030px;top:233.4px;font-size:24.5px;line-height:24.5px;color:#ffffff;white-space:nowrap;">Name</div><svg style="position:absolute;left:1259px;top:234px;" width="26" height="23" viewBox="0 0 26 23"><rect x="1" y="1" width="23" height="4.5" rx="1.5" fill="none" stroke="#fff" stroke-width="2"/><rect x="1" y="9" width="14" height="4.5" rx="1.5" fill="none" stroke="#fff" stroke-width="2"/><rect x="1" y="17" width="8" height="4.5" rx="1.5" fill="none" stroke="#fff" stroke-width="2"/></svg><div style="left:1008px;top:294px;width:296px;height:40px;background:#00b081;border-radius:20px;"></div><div style="left:1030px;top:301.4px;font-size:24.5px;line-height:24.5px;color:#ffffff;white-space:nowrap;letter-spacing:-0.35px;">SUM(Number of Reco..</div><div style="left:752px;top:354px;width:2692px;height:1692px;background:#ffffff;border:2px solid #ababab;"></div><div style="left:773px;top:384.4px;font-size:43px;line-height:43px;color:#333;white-space:nowrap;">Bar chart</div><div style="left:2120px;top:459.8px;font-size:24px;line-height:24px;color:#333;white-space:nowrap;">Name</div><div style="left:866px;top:490px;width:2560px;height:1px;background:#efefef;"></div><div style="left:866px;top:1480px;width:2560px;height:2px;background:#f0f0f0;"></div><div style="left:866px;top:1339px;width:2560px;height:2px;background:#f0f0f0;"></div><div style="left:866px;top:1198px;width:2560px;height:2px;background:#f0f0f0;"></div><div style="left:866px;top:1056px;width:2560px;height:2px;background:#f0f0f0;"></div><div style="left:866px;top:914px;width:2560px;height:2px;background:#f0f0f0;"></div><div style="left:866px;top:773px;width:2560px;height:2px;background:#f0f0f0;"></div><div style="left:866px;top:632px;width:2560px;height:2px;background:#f0f0f0;"></div><div style="left:876px;top:490px;width:1px;height:1133px;background:#f0f0f0;"></div><div style="left:866px;top:1622px;width:2560px;height:2px;background:#ededed;"></div><div style="left:800px;top:1592.6px;font-size:25.5px;line-height:25.5px;color:#666;width:63.5px;text-align:right;white-space:nowrap;letter-spacing:2px;">0</div><div style="left:800px;top:1469.1px;font-size:25.5px;line-height:25.5px;color:#666;width:63.5px;text-align:right;white-space:nowrap;letter-spacing:2px;">2</div><div style="left:800px;top:1327.6px;font-size:25.5px;line-height:25.5px;color:#666;width:63.5px;text-align:right;white-space:nowrap;letter-spacing:2px;">4</div><div style="left:800px;top:1186.1px;font-size:25.5px;line-height:25.5px;color:#666;width:63.5px;text-align:right;white-space:nowrap;letter-spacing:2px;">6</div><div style="left:800px;top:1044.6px;font-size:25.5px;line-height:25.5px;color:#666;width:63.5px;text-align:right;white-space:nowrap;letter-spacing:2px;">8</div><div style="left:800px;top:903.1px;font-size:25.5px;line-height:25.5px;color:#666;width:63.5px;text-align:right;white-space:nowrap;letter-spacing:2px;">10</div><div style="left:800px;top:761.6px;font-size:25.5px;line-height:25.5px;color:#666;width:63.5px;text-align:right;white-space:nowrap;letter-spacing:2px;">12</div><div style="left:800px;top:620.1px;font-size:25.5px;line-height:25.5px;color:#666;width:63.5px;text-align:right;white-space:nowrap;letter-spacing:2px;">14</div><div style="left:800px;top:496.9px;font-size:25.5px;line-height:25.5px;color:#666;width:63.5px;text-align:right;white-space:nowrap;letter-spacing:2px;">16</div><div style="left:882px;top:561.2px;width:30px;height:1059.8px;background:#4e79a7;"></div><div style="left:876px;top:1624px;width:2px;height:8px;background:#ededed;"></div><div style="left:922px;top:773.5px;width:30px;height:847.5px;background:#4e79a7;"></div><div style="left:916px;top:1624px;width:2px;height:8px;background:#ededed;"></div><div style="left:962px;top:773.5px;width:30px;height:847.5px;background:#4e79a7;"></div><div style="left:956px;top:1624px;width:2px;height:8px;background:#ededed;"></div><div style="left:1002px;top:844.2px;width:30px;height:776.8px;background:#4e79a7;"></div><div style="left:996px;top:1624px;width:2px;height:8px;background:#ededed;"></div><div style="left:1042px;top:844.2px;width:30px;height:776.8px;background:#4e79a7;"></div><div style="left:1036px;top:1624px;width:2px;height:8px;background:#ededed;"></div><div style="left:1082px;top:985.8px;width:30px;height:635.2px;background:#4e79a7;"></div><div style="left:1076px;top:1624px;width:2px;height:8px;background:#ededed;"></div><div style="left:1122px;top:1056.5px;width:30px;height:564.5px;background:#4e79a7;"></div><div style="left:1116px;top:1624px;width:2px;height:8px;background:#ededed;"></div><div style="left:1162px;top:1056.5px;width:30px;height:564.5px;background:#4e79a7;"></div><div style="left:1156px;top:1624px;width:2px;height:8px;background:#ededed;"></div><div style="left:1202px;top:1056.5px;width:30px;height:564.5px;background:#4e79a7;"></div><div style="left:1196px;top:1624px;width:2px;height:8px;background:#ededed;"></div><div style="left:1242px;top:1056.5px;width:30px;height:564.5px;background:#4e79a7;"></div><div style="left:1236px;top:1624px;width:2px;height:8px;background:#ededed;"></div><div style="left:1282px;top:1127.2px;width:30px;height:493.8px;background:#4e79a7;"></div><div style="left:1276px;top:1624px;width:2px;height:8px;background:#ededed;"></div><div style="left:1322px;top:1127.2px;width:30px;height:493.8px;background:#4e79a7;"></div><div style="left:1316px;top:1624px;width:2px;height:8px;background:#ededed;"></div><div style="left:1362px;top:1198.0px;width:30px;height:423.0px;background:#4e79a7;"></div><div style="left:1356px;top:1624px;width:2px;height:8px;background:#ededed;"></div><div style="left:1402px;top:1198.0px;width:30px;height:423.0px;background:#4e79a7;"></div><div style="left:1396px;top:1624px;width:2px;height:8px;background:#ededed;"></div><div style="left:1442px;top:1198.0px;width:30px;height:423.0px;background:#4e79a7;"></div><div style="left:1436px;top:1624px;width:2px;height:8px;background:#ededed;"></div><div style="left:1482px;top:1198.0px;width:30px;height:423.0px;background:#4e79a7;"></div><div style="left:1476px;top:1624px;width:2px;height:8px;background:#ededed;"></div><div style="left:1522px;top:1198.0px;width:30px;height:423.0px;background:#4e79a7;"></div><div style="left:1516px;top:1624px;width:2px;height:8px;background:#ededed;"></div><div style="left:1562px;top:1198.0px;width:30px;height:423.0px;background:#4e79a7;"></div><div style="left:1556px;top:1624px;width:2px;height:8px;background:#ededed;"></div><div style="left:1602px;top:1198.0px;width:30px;height:423.0px;background:#4e79a7;"></div><div style="left:1596px;top:1624px;width:2px;height:8px;background:#ededed;"></div><div style="left:1642px;top:1198.0px;width:30px;height:423.0px;background:#4e79a7;"></div><div style="left:1636px;top:1624px;width:2px;height:8px;background:#ededed;"></div><div style="left:1682px;top:1198.0px;width:30px;height:423.0px;background:#4e79a7;"></div><div style="left:1676px;top:1624px;width:2px;height:8px;background:#ededed;"></div><div style="left:1722px;top:1198.0px;width:30px;height:423.0px;background:#4e79a7;"></div><div style="left:1716px;top:1624px;width:2px;height:8px;background:#ededed;"></div><div style="left:1762px;top:1198.0px;width:30px;height:423.0px;background:#4e79a7;"></div><div style="left:1756px;top:1624px;width:2px;height:8px;background:#ededed;"></div><div style="left:1802px;top:1198.0px;width:30px;height:423.0px;background:#4e79a7;"></div><div style="left:1796px;top:1624px;width:2px;height:8px;background:#ededed;"></div><div style="left:1842px;top:1198.0px;width:30px;height:423.0px;background:#4e79a7;"></div><div style="left:1836px;top:1624px;width:2px;height:8px;background:#ededed;"></div><div style="left:1882px;top:1198.0px;width:30px;height:423.0px;background:#4e79a7;"></div><div style="left:1876px;top:1624px;width:2px;height:8px;background:#ededed;"></div><div style="left:1922px;top:1268.8px;width:30px;height:352.2px;background:#4e79a7;"></div><div style="left:1916px;top:1624px;width:2px;height:8px;background:#ededed;"></div><div style="left:1962px;top:1268.8px;width:30px;height:352.2px;background:#4e79a7;"></div><div style="left:1956px;top:1624px;width:2px;height:8px;background:#ededed;"></div><div style="left:2002px;top:1268.8px;width:30px;height:352.2px;background:#4e79a7;"></div><div style="left:1996px;top:1624px;width:2px;height:8px;background:#ededed;"></div><div style="left:2042px;top:1268.8px;width:30px;height:352.2px;background:#4e79a7;"></div><div style="left:2036px;top:1624px;width:2px;height:8px;background:#ededed;"></div><div style="left:2082px;top:1268.8px;width:30px;height:352.2px;background:#4e79a7;"></div><div style="left:2076px;top:1624px;width:2px;height:8px;background:#ededed;"></div><div style="left:2122px;top:1268.8px;width:30px;height:352.2px;background:#4e79a7;"></div><div style="left:2116px;top:1624px;width:2px;height:8px;background:#ededed;"></div><div style="left:2162px;top:1268.8px;width:30px;height:352.2px;background:#4e79a7;"></div><div style="left:2156px;top:1624px;width:2px;height:8px;background:#ededed;"></div><div style="left:2202px;top:1268.8px;width:30px;height:352.2px;background:#4e79a7;"></div><div style="left:2196px;top:1624px;width:2px;height:8px;background:#ededed;"></div><div style="left:2242px;top:1268.8px;width:30px;height:352.2px;background:#4e79a7;"></div><div style="left:2236px;top:1624px;width:2px;height:8px;background:#ededed;"></div><div style="left:2282px;top:1268.8px;width:30px;height:352.2px;background:#4e79a7;"></div><div style="left:2276px;top:1624px;width:2px;height:8px;background:#ededed;"></div><div style="left:2322px;top:1268.8px;width:30px;height:352.2px;background:#4e79a7;"></div><div style="left:2316px;top:1624px;width:2px;height:8px;background:#ededed;"></div><div style="left:2362px;top:1268.8px;width:30px;height:352.2px;background:#4e79a7;"></div><div style="left:2356px;top:1624px;width:2px;height:8px;background:#ededed;"></div><div style="left:2402px;top:1268.8px;width:30px;height:352.2px;background:#4e79a7;"></div><div style="left:2396px;top:1624px;width:2px;height:8px;background:#ededed;"></div><div style="left:2442px;top:1268.8px;width:30px;height:352.2px;background:#4e79a7;"></div><div style="left:2436px;top:1624px;width:2px;height:8px;background:#ededed;"></div><div style="left:2482px;top:1268.8px;width:30px;height:352.2px;background:#4e79a7;"></div><div style="left:2476px;top:1624px;width:2px;height:8px;background:#ededed;"></div><div style="left:2522px;top:1268.8px;width:30px;height:352.2px;background:#4e79a7;"></div><div style="left:2516px;top:1624px;width:2px;height:8px;background:#ededed;"></div><div style="left:2562px;top:1339.5px;width:30px;height:281.5px;background:#4e79a7;"></div><div style="left:2556px;top:1624px;width:2px;height:8px;background:#ededed;"></div><div style="left:2602px;top:1339.5px;width:30px;height:281.5px;background:#4e79a7;"></div><div style="left:2596px;top:1624px;width:2px;height:8px;background:#ededed;"></div><div style="left:2642px;top:1339.5px;width:30px;height:281.5px;background:#4e79a7;"></div><div style="left:2636px;top:1624px;width:2px;height:8px;background:#ededed;"></div><div style="left:2682px;top:1339.5px;width:30px;height:281.5px;background:#4e79a7;"></div><div style="left:2676px;top:1624px;width:2px;height:8px;background:#ededed;"></div><div style="left:2722px;top:1339.5px;width:30px;height:281.5px;background:#4e79a7;"></div><div style="left:2716px;top:1624px;width:2px;height:8px;background:#ededed;"></div><div style="left:2762px;top:1339.5px;width:30px;height:281.5px;background:#4e79a7;"></div><div style="left:2756px;top:1624px;width:2px;height:8px;background:#ededed;"></div><div style="left:2802px;top:1339.5px;width:30px;height:281.5px;background:#4e79a7;"></div><div style="left:2796px;top:1624px;width:2px;height:8px;background:#ededed;"></div><div style="left:2842px;top:1339.5px;width:30px;height:281.5px;background:#4e79a7;"></div><div style="left:2836px;top:1624px;width:2px;height:8px;background:#ededed;"></div><div style="left:2882px;top:1339.5px;width:30px;height:281.5px;background:#4e79a7;"></div><div style="left:2876px;top:1624px;width:2px;height:8px;background:#ededed;"></div><div style="left:2922px;top:1339.5px;width:30px;height:281.5px;background:#4e79a7;"></div><div style="left:2916px;top:1624px;width:2px;height:8px;background:#ededed;"></div><div style="left:2962px;top:1339.5px;width:30px;height:281.5px;background:#4e79a7;"></div><div style="left:2956px;top:1624px;width:2px;height:8px;background:#ededed;"></div><div style="left:3002px;top:1339.5px;width:30px;height:281.5px;background:#4e79a7;"></div><div style="left:2996px;top:1624px;width:2px;height:8px;background:#ededed;"></div><div style="left:3042px;top:1339.5px;width:30px;height:281.5px;background:#4e79a7;"></div><div style="left:3036px;top:1624px;width:2px;height:8px;background:#ededed;"></div><div style="left:3082px;top:1339.5px;width:30px;height:281.5px;background:#4e79a7;"></div><div style="left:3076px;top:1624px;width:2px;height:8px;background:#ededed;"></div><div style="left:3122px;top:1339.5px;width:30px;height:281.5px;background:#4e79a7;"></div><div style="left:3116px;top:1624px;width:2px;height:8px;background:#ededed;"></div><div style="left:3162px;top:1339.5px;width:30px;height:281.5px;background:#4e79a7;"></div><div style="left:3156px;top:1624px;width:2px;height:8px;background:#ededed;"></div><div style="left:3202px;top:1339.5px;width:30px;height:281.5px;background:#4e79a7;"></div><div style="left:3196px;top:1624px;width:2px;height:8px;background:#ededed;"></div><div style="left:3242px;top:1339.5px;width:30px;height:281.5px;background:#4e79a7;"></div><div style="left:3236px;top:1624px;width:2px;height:8px;background:#ededed;"></div><div style="left:3282px;top:1339.5px;width:30px;height:281.5px;background:#4e79a7;"></div><div style="left:3276px;top:1624px;width:2px;height:8px;background:#ededed;"></div><div style="left:3322px;top:1339.5px;width:30px;height:281.5px;background:#4e79a7;"></div><div style="left:3316px;top:1624px;width:2px;height:8px;background:#ededed;"></div><div style="left:3362px;top:1339.5px;width:30px;height:281.5px;background:#4e79a7;"></div><div style="left:3356px;top:1624px;width:2px;height:8px;background:#ededed;"></div><div style="left:3402px;top:1339.5px;width:24px;height:281.5px;background:#4e79a7;"></div><div style="left:3396px;top:1624px;width:2px;height:8px;background:#ededed;"></div><div style="left:0;top:0;width:3426px;height:2040px;overflow:hidden;"><div class="lab" style="left:885.1px;top:1964.0px;width:334.9px;height:26px;font-size:25.3px;line-height:25.3px;color:#666;white-space:nowrap;transform-origin:0 0;transform:rotate(-90deg) scaleX(1.0033);">Charming West Village studio</div><div class="lab" style="left:925.1px;top:1910.0px;width:279.6px;height:26px;font-size:25.3px;line-height:25.3px;color:#666;white-space:nowrap;transform-origin:0 0;transform:rotate(-90deg) scaleX(1.0088);">Private room in Brooklyn</div><div class="lab" style="left:965.1px;top:1925.6px;width:320.3px;height:26px;font-size:25.3px;line-height:25.3px;color:#666;white-space:nowrap;transform-origin:0 0;transform:rotate(-90deg) scaleX(0.9283);">HOME AWAY FROM HOME</div><div class="lab" style="left:1005.1px;top:1987.8px;width:385.0px;height:26px;font-size:25.3px;line-height:25.3px;color:#666;white-space:nowrap;transform-origin:0 0;transform:rotate(-90deg) scaleX(0.9339);">Private Room in WILLIAMSBURG</div><div class="lab" style="left:1045.1px;top:1987.8px;width:378.0px;height:26px;font-size:25.3px;line-height:25.3px;color:#666;white-space:nowrap;transform-origin:0 0;transform:rotate(-90deg) scaleX(0.9514);">Loft Suite @ The Box House Ho..</div><div class="lab" style="left:1085.1px;top:1781.5px;width:157.3px;height:26px;font-size:25.3px;line-height:25.3px;color:#666;white-space:nowrap;transform-origin:0 0;transform:rotate(-90deg) scaleX(0.9755);">Private Room</div><div class="lab" style="left:1125.1px;top:1854.0px;width:229.9px;height:26px;font-size:25.3px;line-height:25.3px;color:#666;white-space:nowrap;transform-origin:0 0;transform:rotate(-90deg) scaleX(0.9827);">Wen Xin Hostel (50)</div><div class="lab" style="left:1165.1px;top:1854.0px;width:229.9px;height:26px;font-size:25.3px;line-height:25.3px;color:#666;white-space:nowrap;transform-origin:0 0;transform:rotate(-90deg) scaleX(0.9827);">Wen Xin Hostel (35)</div><div class="lab" style="left:1205.1px;top:1984.6px;width:356.9px;height:26px;font-size:25.3px;line-height:25.3px;color:#666;white-space:nowrap;transform-origin:0 0;transform:rotate(-90deg) scaleX(0.9992);">Private Room in Williamsburg ..</div><div class="lab" style="left:1245.1px;top:1892.6px;width:259.5px;height:26px;font-size:25.3px;line-height:25.3px;color:#666;white-space:nowrap;transform-origin:0 0;transform:rotate(-90deg) scaleX(1.0200);">East Village Apartment</div><div class="lab" style="left:1285.1px;top:1986.5px;width:361.2px;height:26px;font-size:25.3px;line-height:25.3px;color:#666;white-space:nowrap;transform-origin:0 0;transform:rotate(-90deg) scaleX(0.9925);">Spacious 1 Bedroom Apartment</div><div class="lab" style="left:1325.1px;top:1933.6px;width:300.7px;height:26px;font-size:25.3px;line-height:25.3px;color:#666;white-space:nowrap;transform-origin:0 0;transform:rotate(-90deg) scaleX(1.0165);">Private room in Manhattan</div><div class="lab" style="left:1365.1px;top:1853.0px;width:222.4px;height:26px;font-size:25.3px;line-height:25.3px;color:#666;white-space:nowrap;transform-origin:0 0;transform:rotate(-90deg) scaleX(1.0117);">West Village Studio</div><div class="lab" style="left:1405.1px;top:1887.0px;width:267.0px;height:26px;font-size:25.3px;line-height:25.3px;color:#666;white-space:nowrap;transform-origin:0 0;transform:rotate(-90deg) scaleX(0.9696);">Upper East Side Studio</div><div class="lab" style="left:1445.1px;top:1864.8px;width:238.8px;height:26px;font-size:25.3px;line-height:25.3px;color:#666;white-space:nowrap;transform-origin:0 0;transform:rotate(-90deg) scaleX(0.9915);">The Brooklyn Riviera</div><div class="lab" style="left:1485.1px;top:1932.0px;width:299.3px;height:26px;font-size:25.3px;line-height:25.3px;color:#666;white-space:nowrap;transform-origin:0 0;transform:rotate(-90deg) scaleX(1.0159);">spacious studio apartment</div><div class="lab" style="left:1525.1px;top:1808.0px;width:182.6px;height:26px;font-size:25.3px;line-height:25.3px;color:#666;white-space:nowrap;transform-origin:0 0;transform:rotate(-90deg) scaleX(0.9854);">Spacious studio</div><div class="lab" style="left:1565.1px;top:1915.0px;width:288.0px;height:26px;font-size:25.3px;line-height:25.3px;color:#666;white-space:nowrap;transform-origin:0 0;transform:rotate(-90deg) scaleX(0.9964);">Private room in Bushwick</div><div class="lab" style="left:1605.1px;top:1987.8px;width:362.5px;height:26px;font-size:25.3px;line-height:25.3px;color:#666;white-space:nowrap;transform-origin:0 0;transform:rotate(-90deg) scaleX(0.9924);">Private Bedroom in Williamsbu..</div><div class="lab" style="left:1645.1px;top:1853.0px;width:246.3px;height:26px;font-size:25.3px;line-height:25.3px;color:#666;white-space:nowrap;transform-origin:0 0;transform:rotate(-90deg) scaleX(0.9123);">PRIVATE BEDROOM</div><div class="lab" style="left:1685.1px;top:1986.5px;width:361.1px;height:26px;font-size:25.3px;line-height:25.3px;color:#666;white-space:nowrap;transform-origin:0 0;transform:rotate(-90deg) scaleX(0.9928);">Cozy room in heart of Williams..</div><div class="lab" style="left:1725.1px;top:1884.6px;width:268.3px;height:26px;font-size:25.3px;line-height:25.3px;color:#666;white-space:nowrap;transform-origin:0 0;transform:rotate(-90deg) scaleX(0.9556);">Cozy Room in Brooklyn</div><div class="lab" style="left:1765.1px;top:1839.7px;width:221.9px;height:26px;font-size:25.3px;line-height:25.3px;color:#666;white-space:nowrap;transform-origin:0 0;transform:rotate(-90deg) scaleX(0.9531);">Cozy Private Room</div><div class="lab" style="left:1805.1px;top:1987.8px;width:361.6px;height:26px;font-size:25.3px;line-height:25.3px;color:#666;white-space:nowrap;transform-origin:0 0;transform:rotate(-90deg) scaleX(0.9949);">Charming West Village Apartm..</div><div class="lab" style="left:1845.1px;top:1976.0px;width:347.1px;height:26px;font-size:25.3px;line-height:25.3px;color:#666;white-space:nowrap;transform-origin:0 0;transform:rotate(-90deg) scaleX(1.0025);">Beautiful One Bedroom Apart..</div><div class="lab" style="left:1885.1px;top:1983.9px;width:348.5px;height:26px;font-size:25.3px;line-height:25.3px;color:#666;white-space:nowrap;transform-origin:0 0;transform:rotate(-90deg) scaleX(1.0214);">Beautiful Brooklyn Brownstone</div><div class="lab" style="left:1925.1px;top:1901.8px;width:266.0px;height:26px;font-size:25.3px;line-height:25.3px;color:#666;white-space:nowrap;transform-origin:0 0;transform:rotate(-90deg) scaleX(1.0297);">West Village Apartment</div><div class="lab" style="left:1965.1px;top:1853.0px;width:229.9px;height:26px;font-size:25.3px;line-height:25.3px;color:#666;white-space:nowrap;transform-origin:0 0;transform:rotate(-90deg) scaleX(0.9783);">Wen Xin Hostel (80)</div><div class="lab" style="left:2005.1px;top:1802.6px;width:177.0px;height:26px;font-size:25.3px;line-height:25.3px;color:#666;white-space:nowrap;transform-origin:0 0;transform:rotate(-90deg) scaleX(0.9862);">upper east side</div><div class="lab" style="left:2045.1px;top:1987.8px;width:359.7px;height:26px;font-size:25.3px;line-height:25.3px;color:#666;white-space:nowrap;transform-origin:0 0;transform:rotate(-90deg) scaleX(1.0002);">Spacious Williamsburg apartm..</div><div class="lab" style="left:2085.1px;top:1987.8px;width:369.6px;height:26px;font-size:25.3px;line-height:25.3px;color:#666;white-space:nowrap;transform-origin:0 0;transform:rotate(-90deg) scaleX(0.9732);">Spacious Private Room in Broo..</div><div class="lab" style="left:2125.1px;top:1986.5px;width:375.2px;height:26px;font-size:25.3px;line-height:25.3px;color:#666;white-space:nowrap;transform-origin:0 0;transform:rotate(-90deg) scaleX(0.9551);">Private Room in PRIME WILLIA..</div><div class="lab" style="left:2165.1px;top:1946.8px;width:324.1px;height:26px;font-size:25.3px;line-height:25.3px;color:#666;white-space:nowrap;transform-origin:0 0;transform:rotate(-90deg) scaleX(0.9833);">Private Room in East Village</div><div class="lab" style="left:2205.1px;top:1911.0px;width:283.8px;height:26px;font-size:25.3px;line-height:25.3px;color:#666;white-space:nowrap;transform-origin:0 0;transform:rotate(-90deg) scaleX(0.9970);">One Bedroom Apartment</div><div class="lab" style="left:2245.1px;top:1945.5px;width:331.7px;height:26px;font-size:25.3px;line-height:25.3px;color:#666;white-space:nowrap;transform-origin:0 0;transform:rotate(-90deg) scaleX(0.9568);">Cozy Upper East Side Studio</div><div class="lab" style="left:2285.1px;top:1929.6px;width:304.8px;height:26px;font-size:25.3px;line-height:25.3px;color:#666;white-space:nowrap;transform-origin:0 0;transform:rotate(-90deg) scaleX(0.9892);">Cozy room in Williamsburg</div><div class="lab" style="left:2325.1px;top:1982.5px;width:355.1px;height:26px;font-size:25.3px;line-height:25.3px;color:#666;white-space:nowrap;transform-origin:0 0;transform:rotate(-90deg) scaleX(0.9984);">Charming East Village Apartm..</div><div class="lab" style="left:2365.1px;top:1966.7px;width:331.6px;height:26px;font-size:25.3px;line-height:25.3px;color:#666;white-space:nowrap;transform-origin:0 0;transform:rotate(-90deg) scaleX(1.0216);">charming brooklyn apartment</div><div class="lab" style="left:2405.1px;top:1987.8px;width:355.5px;height:26px;font-size:25.3px;line-height:25.3px;color:#666;white-space:nowrap;transform-origin:0 0;transform:rotate(-90deg) scaleX(1.0121);">Bedroom with private bathroom</div><div class="lab" style="left:2445.1px;top:1987.8px;width:351.4px;height:26px;font-size:25.3px;line-height:25.3px;color:#666;white-space:nowrap;transform-origin:0 0;transform:rotate(-90deg) scaleX(1.0243);">beautiful brownstone apartme..</div><div class="lab" style="left:2485.1px;top:1987.8px;width:352.8px;height:26px;font-size:25.3px;line-height:25.3px;color:#666;white-space:nowrap;transform-origin:0 0;transform:rotate(-90deg) scaleX(1.0202);">Beautiful 2 bedroom Apartment</div><div class="lab" style="left:2525.1px;top:1876.7px;width:245.9px;height:26px;font-size:25.3px;line-height:25.3px;color:#666;white-space:nowrap;transform-origin:0 0;transform:rotate(-90deg) scaleX(1.0117);">1 bedroom apartment</div><div class="lab" style="left:2565.1px;top:1969.3px;width:332.1px;height:26px;font-size:25.3px;line-height:25.3px;color:#666;white-space:nowrap;transform-origin:0 0;transform:rotate(-90deg) scaleX(1.0281);">Wall Street Luxury Apartment</div><div class="lab" style="left:2605.1px;top:1946.8px;width:318.9px;height:26px;font-size:25.3px;line-height:25.3px;color:#666;white-space:nowrap;transform-origin:0 0;transform:rotate(-90deg) scaleX(0.9996);">Sunny room in Williamsburg</div><div class="lab" style="left:2645.1px;top:1987.8px;width:368.2px;height:26px;font-size:25.3px;line-height:25.3px;color:#666;white-space:nowrap;transform-origin:0 0;transform:rotate(-90deg) scaleX(0.9770);">Sunny Private Room in Brooklyn</div><div class="lab" style="left:2685.1px;top:1987.8px;width:361.1px;height:26px;font-size:25.3px;line-height:25.3px;color:#666;white-space:nowrap;transform-origin:0 0;transform:rotate(-90deg) scaleX(0.9962);">Sunny bedroom in Williamsburg</div><div class="lab" style="left:2725.1px;top:1832.6px;width:198.1px;height:26px;font-size:25.3px;line-height:25.3px;color:#666;white-space:nowrap;transform-origin:0 0;transform:rotate(-90deg) scaleX(1.0336);">Studio Apartment</div><div class="lab" style="left:2765.1px;top:1704.3px;width:75.7px;height:26px;font-size:25.3px;line-height:25.3px;color:#666;white-space:nowrap;transform-origin:0 0;transform:rotate(-90deg) scaleX(1.0079);">Studio</div><div class="lab" style="left:2805.1px;top:1987.6px;width:371.1px;height:26px;font-size:25.3px;line-height:25.3px;color:#666;white-space:nowrap;transform-origin:0 0;transform:rotate(-90deg) scaleX(0.9688);">Spacious Upper East Side Apar..</div><div class="lab" style="left:2845.1px;top:1928.4px;width:313.4px;height:26px;font-size:25.3px;line-height:25.3px;color:#666;white-space:nowrap;transform-origin:0 0;transform:rotate(-90deg) scaleX(0.9580);">Spacious Studio in Chelsea</div><div class="lab" style="left:2885.1px;top:1983.0px;width:361.1px;height:26px;font-size:25.3px;line-height:25.3px;color:#666;white-space:nowrap;transform-origin:0 0;transform:rotate(-90deg) scaleX(0.9828);">Spacious Room in Williamsburg</div><div class="lab" style="left:2925.1px;top:1887.3px;width:268.4px;height:26px;font-size:25.3px;line-height:25.3px;color:#666;white-space:nowrap;transform-origin:0 0;transform:rotate(-90deg) scaleX(0.9658);">Spacious Private Room</div><div class="lab" style="left:2965.1px;top:1987.6px;width:363.5px;height:26px;font-size:25.3px;line-height:25.3px;color:#666;white-space:nowrap;transform-origin:0 0;transform:rotate(-90deg) scaleX(0.9890);">Spacious East Village Apartme..</div><div class="lab" style="left:3005.1px;top:1914.7px;width:288.0px;height:26px;font-size:25.3px;line-height:25.3px;color:#666;white-space:nowrap;transform-origin:0 0;transform:rotate(-90deg) scaleX(0.9953);">Private room in New York</div><div class="lab" style="left:3045.1px;top:1987.6px;width:368.2px;height:26px;font-size:25.3px;line-height:25.3px;color:#666;white-space:nowrap;transform-origin:0 0;transform:rotate(-90deg) scaleX(0.9765);">Private Room in Luxury Apartm..</div><div class="lab" style="left:3085.1px;top:1987.7px;width:365.4px;height:26px;font-size:25.3px;line-height:25.3px;color:#666;white-space:nowrap;transform-origin:0 0;transform:rotate(-90deg) scaleX(0.9843);">Private room in 2 bedroom apa..</div><div class="lab" style="left:3125.1px;top:1961.0px;width:333.0px;height:26px;font-size:25.3px;line-height:25.3px;color:#666;white-space:nowrap;transform-origin:0 0;transform:rotate(-90deg) scaleX(1.0000);">Private Bedroom in Bushwick</div><div class="lab" style="left:3165.1px;top:1952.6px;width:324.6px;height:26px;font-size:25.3px;line-height:25.3px;color:#666;white-space:nowrap;transform-origin:0 0;transform:rotate(-90deg) scaleX(1.0000);">Private Bedroom in Brooklyn</div><div class="lab" style="left:3205.1px;top:1987.7px;width:369.6px;height:26px;font-size:25.3px;line-height:25.3px;color:#666;white-space:nowrap;transform-origin:0 0;transform:rotate(-90deg) scaleX(0.9729);">Newly Renovated 1 Bedroom A..</div><div class="lab" style="left:3245.1px;top:1970.9px;width:342.9px;height:26px;font-size:25.3px;line-height:25.3px;color:#666;white-space:nowrap;transform-origin:0 0;transform:rotate(-90deg) scaleX(1.0000);">Large Bedroom w/ private ba..</div><div class="lab" style="left:3285.1px;top:1987.7px;width:372.3px;height:26px;font-size:25.3px;line-height:25.3px;color:#666;white-space:nowrap;transform-origin:0 0;transform:rotate(-90deg) scaleX(0.9658);">Loft w/ Terrace @ Box House H..</div><div class="lab" style="left:3325.1px;top:1968.5px;width:340.5px;height:26px;font-size:25.3px;line-height:25.3px;color:#666;white-space:nowrap;transform-origin:0 0;transform:rotate(-90deg) scaleX(1.0000);">Loft Suite @ Box House Hotel</div><div class="lab" style="left:3365.1px;top:1984.9px;width:356.9px;height:26px;font-size:25.3px;line-height:25.3px;color:#666;white-space:nowrap;transform-origin:0 0;transform:rotate(-90deg) scaleX(1.0000);">Cozy Sunny Room in Williams..</div><div class="lab" style="left:3405.1px;top:1939.9px;width:311.9px;height:26px;font-size:25.3px;line-height:25.3px;color:#666;white-space:nowrap;transform-origin:0 0;transform:rotate(-90deg) scaleX(1.0000);">Large room in Williamsburg</div></div><div style="left:792.0px;top:1159px;font-size:24.4px;line-height:24.4px;color:#333;white-space:nowrap;transform-origin:0 0;transform:rotate(-90deg);">Number of Records</div><svg style="position:absolute;left:792px;top:916px;" width="21" height="21" viewBox="0 0 21 21"><rect x="0" y="0" width="4.5" height="20" fill="#555"/><rect x="8" y="8" width="4.5" height="12" fill="#555"/><rect x="16" y="14" width="4.5" height="6" fill="#555"/></svg><div style="left:876px;top:2002px;width:2566px;height:31px;background:#fcfcfc;border-top:1px solid #e6e6e6;border-bottom:1px solid #e6e6e6;"></div><div style="left:883px;top:2012px;width:35px;height:16px;background:#6e6e6e;border-radius:8px;"></div><div style="left:0px;top:2058px;width:3455px;height:61px;background:#e6e6e6;border-top:2px solid #cfcfcf;"></div><svg style="position:absolute;left:20px;top:2079px;overflow:visible;" width="18" height="22" viewBox="0 0 18 22"><ellipse cx="8.5" cy="4" rx="7" ry="3" fill="none" stroke="#666" stroke-width="2"/><path d="M1.5 4 L1.5 16 Q1.5 19.5 8.5 19.5 Q15.5 19.5 15.5 16 L15.5 4" fill="none" stroke="#666" stroke-width="2"/></svg><div style="left:49px;top:2077.5px;font-size:25px;line-height:25px;color:#555;white-space:nowrap;letter-spacing:-0.3px;">Data Source</div><div style="left:261px;top:2060px;width:133px;height:59px;background:#f8f8f8;"></div><div style="left:275px;top:2078.3px;font-size:24px;line-height:24px;color:#555;font-weight:bold;white-space:nowrap;">Bar chart</div><div style="left:260px;top:2060px;width:2px;height:59px;background:#cfcfcf;"></div><div style="left:393px;top:2060px;width:2px;height:59px;background:#cfcfcf;"></div><div style="left:533px;top:2060px;width:2px;height:59px;background:#cfcfcf;"></div><div style="left:661px;top:2060px;width:2px;height:59px;background:#cfcfcf;"></div><div style="left:825px;top:2060px;width:2px;height:59px;background:#cfcfcf;"></div><div style="left:888px;top:2060px;width:2px;height:59px;background:#cfcfcf;"></div><div style="left:952px;top:2060px;width:2px;height:59px;background:#cfcfcf;"></div><div style="left:406px;top:2077.5px;font-size:25px;line-height:25px;color:#555;white-space:nowrap;letter-spacing:-0.3px;">Line chart</div><div style="left:547px;top:2077.5px;font-size:25px;line-height:25px;color:#555;white-space:nowrap;letter-spacing:-0.3px;">Pie chart</div><div style="left:675px;top:2077.5px;font-size:25px;line-height:25px;color:#555;white-space:nowrap;">Scatter plot</div><svg style="position:absolute;left:842px;top:2074px;overflow:visible;" width="34" height="34" viewBox="0 0 34 34"><rect x="1" y="2" width="22" height="20" rx="1" fill="none" stroke="#666" stroke-width="2"/><rect x="6" y="12" width="2.5" height="7" fill="#666"/><rect x="11" y="7" width="2.5" height="12" fill="#666"/><rect x="16" y="10" width="2.5" height="9" fill="#666"/><rect x="17" y="21.25" width="12" height="3.5" fill="#555"/><rect x="21.25" y="17" width="3.5" height="12" fill="#555"/></svg><svg style="position:absolute;left:906px;top:2074px;overflow:visible;" width="34" height="34" viewBox="0 0 34 34"><rect x="1" y="2" width="22" height="20" rx="1" fill="none" stroke="#666" stroke-width="2"/><path d="M1 12 L23 12 M12 2 L12 22" stroke="#666" stroke-width="2"/><rect x="17" y="21.25" width="12" height="3.5" fill="#555"/><rect x="21.25" y="17" width="3.5" height="12" fill="#555"/></svg><svg style="position:absolute;left:970px;top:2074px;overflow:visible;" width="34" height="34" viewBox="0 0 34 34"><path d="M1 4 L9 1 L15 4 L23 1 L23 20 L15 23 L9 20 L1 23 Z" fill="none" stroke="#666" stroke-width="2" stroke-linejoin="round"/><rect x="17" y="21.25" width="12" height="3.5" fill="#555"/><rect x="21.25" y="17" width="3.5" height="12" fill="#555"/></svg><div style="left:0px;top:2118px;width:3455px;height:42px;background:#ececec;border-top:2px solid #d2d2d2;"></div><div style="left:25px;top:2129.4px;font-size:21.5px;line-height:21.5px;color:#222;white-space:nowrap;">29416 marks</div><div style="left:184px;top:2129.4px;font-size:21.5px;line-height:21.5px;color:#222;white-space:nowrap;">1 row by 29416 columns</div><div style="left:446px;top:2129.4px;font-size:21.5px;line-height:21.5px;color:#222;white-space:nowrap;letter-spacing:-0.45px;">SUM(Number of Records): 30,478</div><div style="left:2958px;top:2120px;width:2px;height:40px;background:#d0d0d0;"></div><div style="left:3012px;top:2120px;width:2px;height:40px;background:#d0d0d0;"></div><div style="left:3066px;top:2120px;width:2px;height:40px;background:#d0d0d0;"></div><div style="left:3160px;top:2120px;width:2px;height:40px;background:#d0d0d0;"></div><div style="left:3301px;top:2120px;width:2px;height:40px;background:#d0d0d0;"></div><svg style="position:absolute;left:3178px;top:2128px;overflow:visible;" width="112" height="22" viewBox="0 0 112 22"><rect x="0" y="1" width="2" height="19" fill="#b4b4b4"/><path d="M3 10.5 L12 2 L12 19 Z" fill="#b4b4b4"/><path d="M34 10.5 L43 2 L43 19 Z" fill="#b4b4b4"/><path d="M67 2 L76 10.5 L67 19 Z" fill="#b4b4b4"/><path d="M96 2 L105 10.5 L96 19 Z" fill="#b4b4b4"/><rect x="105" y="1" width="2" height="19" fill="#b4b4b4"/></svg><svg style="position:absolute;left:3321px;top:2137px;overflow:visible;" width="24" height="16" viewBox="0 0 24 16"><rect x="0" y="0" width="6.3" height="6.3" fill="#c4c4c4"/><rect x="0" y="8" width="6.3" height="6.3" fill="#c4c4c4"/><rect x="8" y="0" width="6.3" height="6.3" fill="#c4c4c4"/><rect x="8" y="8" width="6.3" height="6.3" fill="#c4c4c4"/><rect x="16" y="0" width="6.3" height="6.3" fill="#c4c4c4"/><rect x="16" y="8" width="6.3" height="6.3" fill="#c4c4c4"/></svg><svg style="position:absolute;left:3363px;top:2137px;overflow:visible;" width="24" height="16" viewBox="0 0 24 16"><rect x="0" y="0" width="22.3" height="6.3" fill="#c4c4c4"/><rect x="0" y="8" width="6.3" height="6.3" fill="#c4c4c4"/><rect x="8" y="8" width="6.3" height="6.3" fill="#c4c4c4"/><rect x="16" y="8" width="6.3" height="6.3" fill="#c4c4c4"/></svg><svg style="position:absolute;left:3405px;top:2133px;overflow:visible;" width="22" height="18" viewBox="0 0 22 18"><rect x="0" y="0" width="22" height="18" fill="#616161"/></svg></div>
<div style="position:absolute;left:9.2px;top:209.3px;width:328.3px;height:12.3px;background:rgba(150,150,150,0.9);border-radius:3px;"></div>
<div style="position:absolute;left:11.0px;top:211.4px;width:8px;height:8px;border-radius:2px;background:#4a93e0;"></div><div style="position:absolute;left:21.6px;top:211.4px;width:8px;height:8px;border-radius:2px;background:#cfcfd6;"></div><div style="position:absolute;left:32.3px;top:211.4px;width:8px;height:8px;border-radius:2px;background:#52d160;"></div><div style="position:absolute;left:42.9px;top:211.4px;width:8px;height:8px;border-radius:2px;background:#eea35a;"></div><div style="position:absolute;left:53.4px;top:211.4px;width:8px;height:8px;border-radius:2px;background:#45c553;"></div><div style="position:absolute;left:64.0px;top:211.4px;width:8px;height:8px;border-radius:2px;background:#f0eeee;"></div><div style="position:absolute;left:74.4px;top:211.4px;width:8px;height:8px;border-radius:2px;background:#a88a5c;"></div><div style="position:absolute;left:85.0px;top:211.4px;width:8px;height:8px;border-radius:2px;background:#f4f4f4;"></div><div style="position:absolute;left:95.7px;top:211.4px;width:8px;height:8px;border-radius:2px;background:#5a98d8;"></div><div style="position:absolute;left:106.2px;top:211.4px;width:8px;height:8px;border-radius:2px;background:#1c1c1c;"></div><div style="position:absolute;left:117.0px;top:211.4px;width:8px;height:8px;border-radius:2px;background:#a456d6;"></div><div style="position:absolute;left:127.5px;top:211.4px;width:8px;height:8px;border-radius:2px;background:#f04658;"></div><div style="position:absolute;left:138.0px;top:211.4px;width:8px;height:8px;border-radius:2px;background:#2f84ea;"></div><div style="position:absolute;left:148.5px;top:211.4px;width:8px;height:8px;border-radius:2px;background:#3f92ee;"></div><div style="position:absolute;left:159.0px;top:211.4px;width:8px;height:8px;border-radius:2px;background:#5e5e62;"></div><div style="position:absolute;left:169.6px;top:211.4px;width:8px;height:8px;border-radius:2px;background:#86c27a;"></div><div style="position:absolute;left:180.0px;top:211.4px;width:8px;height:8px;border-radius:2px;background:#3a92ea;"></div><div style="position:absolute;left:190.8px;top:211.4px;width:8px;height:8px;border-radius:2px;background:#d9a94a;"></div><div style="position:absolute;left:201.3px;top:211.4px;width:8px;height:8px;border-radius:2px;background:#222222;"></div><div style="position:absolute;left:211.9px;top:211.4px;width:8px;height:8px;border-radius:2px;background:#2b7ad2;"></div><div style="position:absolute;left:222.6px;top:211.4px;width:8px;height:8px;border-radius:2px;background:#3d9be6;"></div><div style="position:absolute;left:233.2px;top:211.4px;width:8px;height:8px;border-radius:2px;background:#2d3946;"></div><div style="position:absolute;left:243.7px;top:211.4px;width:8px;height:8px;border-radius:2px;background:#f1e2a0;"></div><div style="position:absolute;left:259.0px;top:211.4px;width:8px;height:8px;border-radius:2px;background:#66a676;"></div><div style="position:absolute;left:269.5px;top:211.4px;width:8px;height:8px;border-radius:2px;background:#e0522f;"></div><div style="position:absolute;left:280.0px;top:211.4px;width:8px;height:8px;border-radius:2px;background:#e6edf8;"></div><div style="position:absolute;left:290.3px;top:211.4px;width:8px;height:8px;border-radius:2px;background:#e6edf8;"></div><div style="position:absolute;left:306.0px;top:211.4px;width:8px;height:8px;border-radius:2px;background:#4f4036;"></div><div style="position:absolute;left:316.4px;top:211.4px;width:8px;height:8px;border-radius:2px;background:#dfe6ee;"></div><div style="position:absolute;left:327.2px;top:211.4px;width:8px;height:8px;border-radius:2px;background:#8e8e8e;"></div>
<div style="position:absolute;left:70px;top:200.9px;width:17px;height:5.2px;background:#5a5a5a;border-radius:1px;"></div>
</div></div>
</body></html>
